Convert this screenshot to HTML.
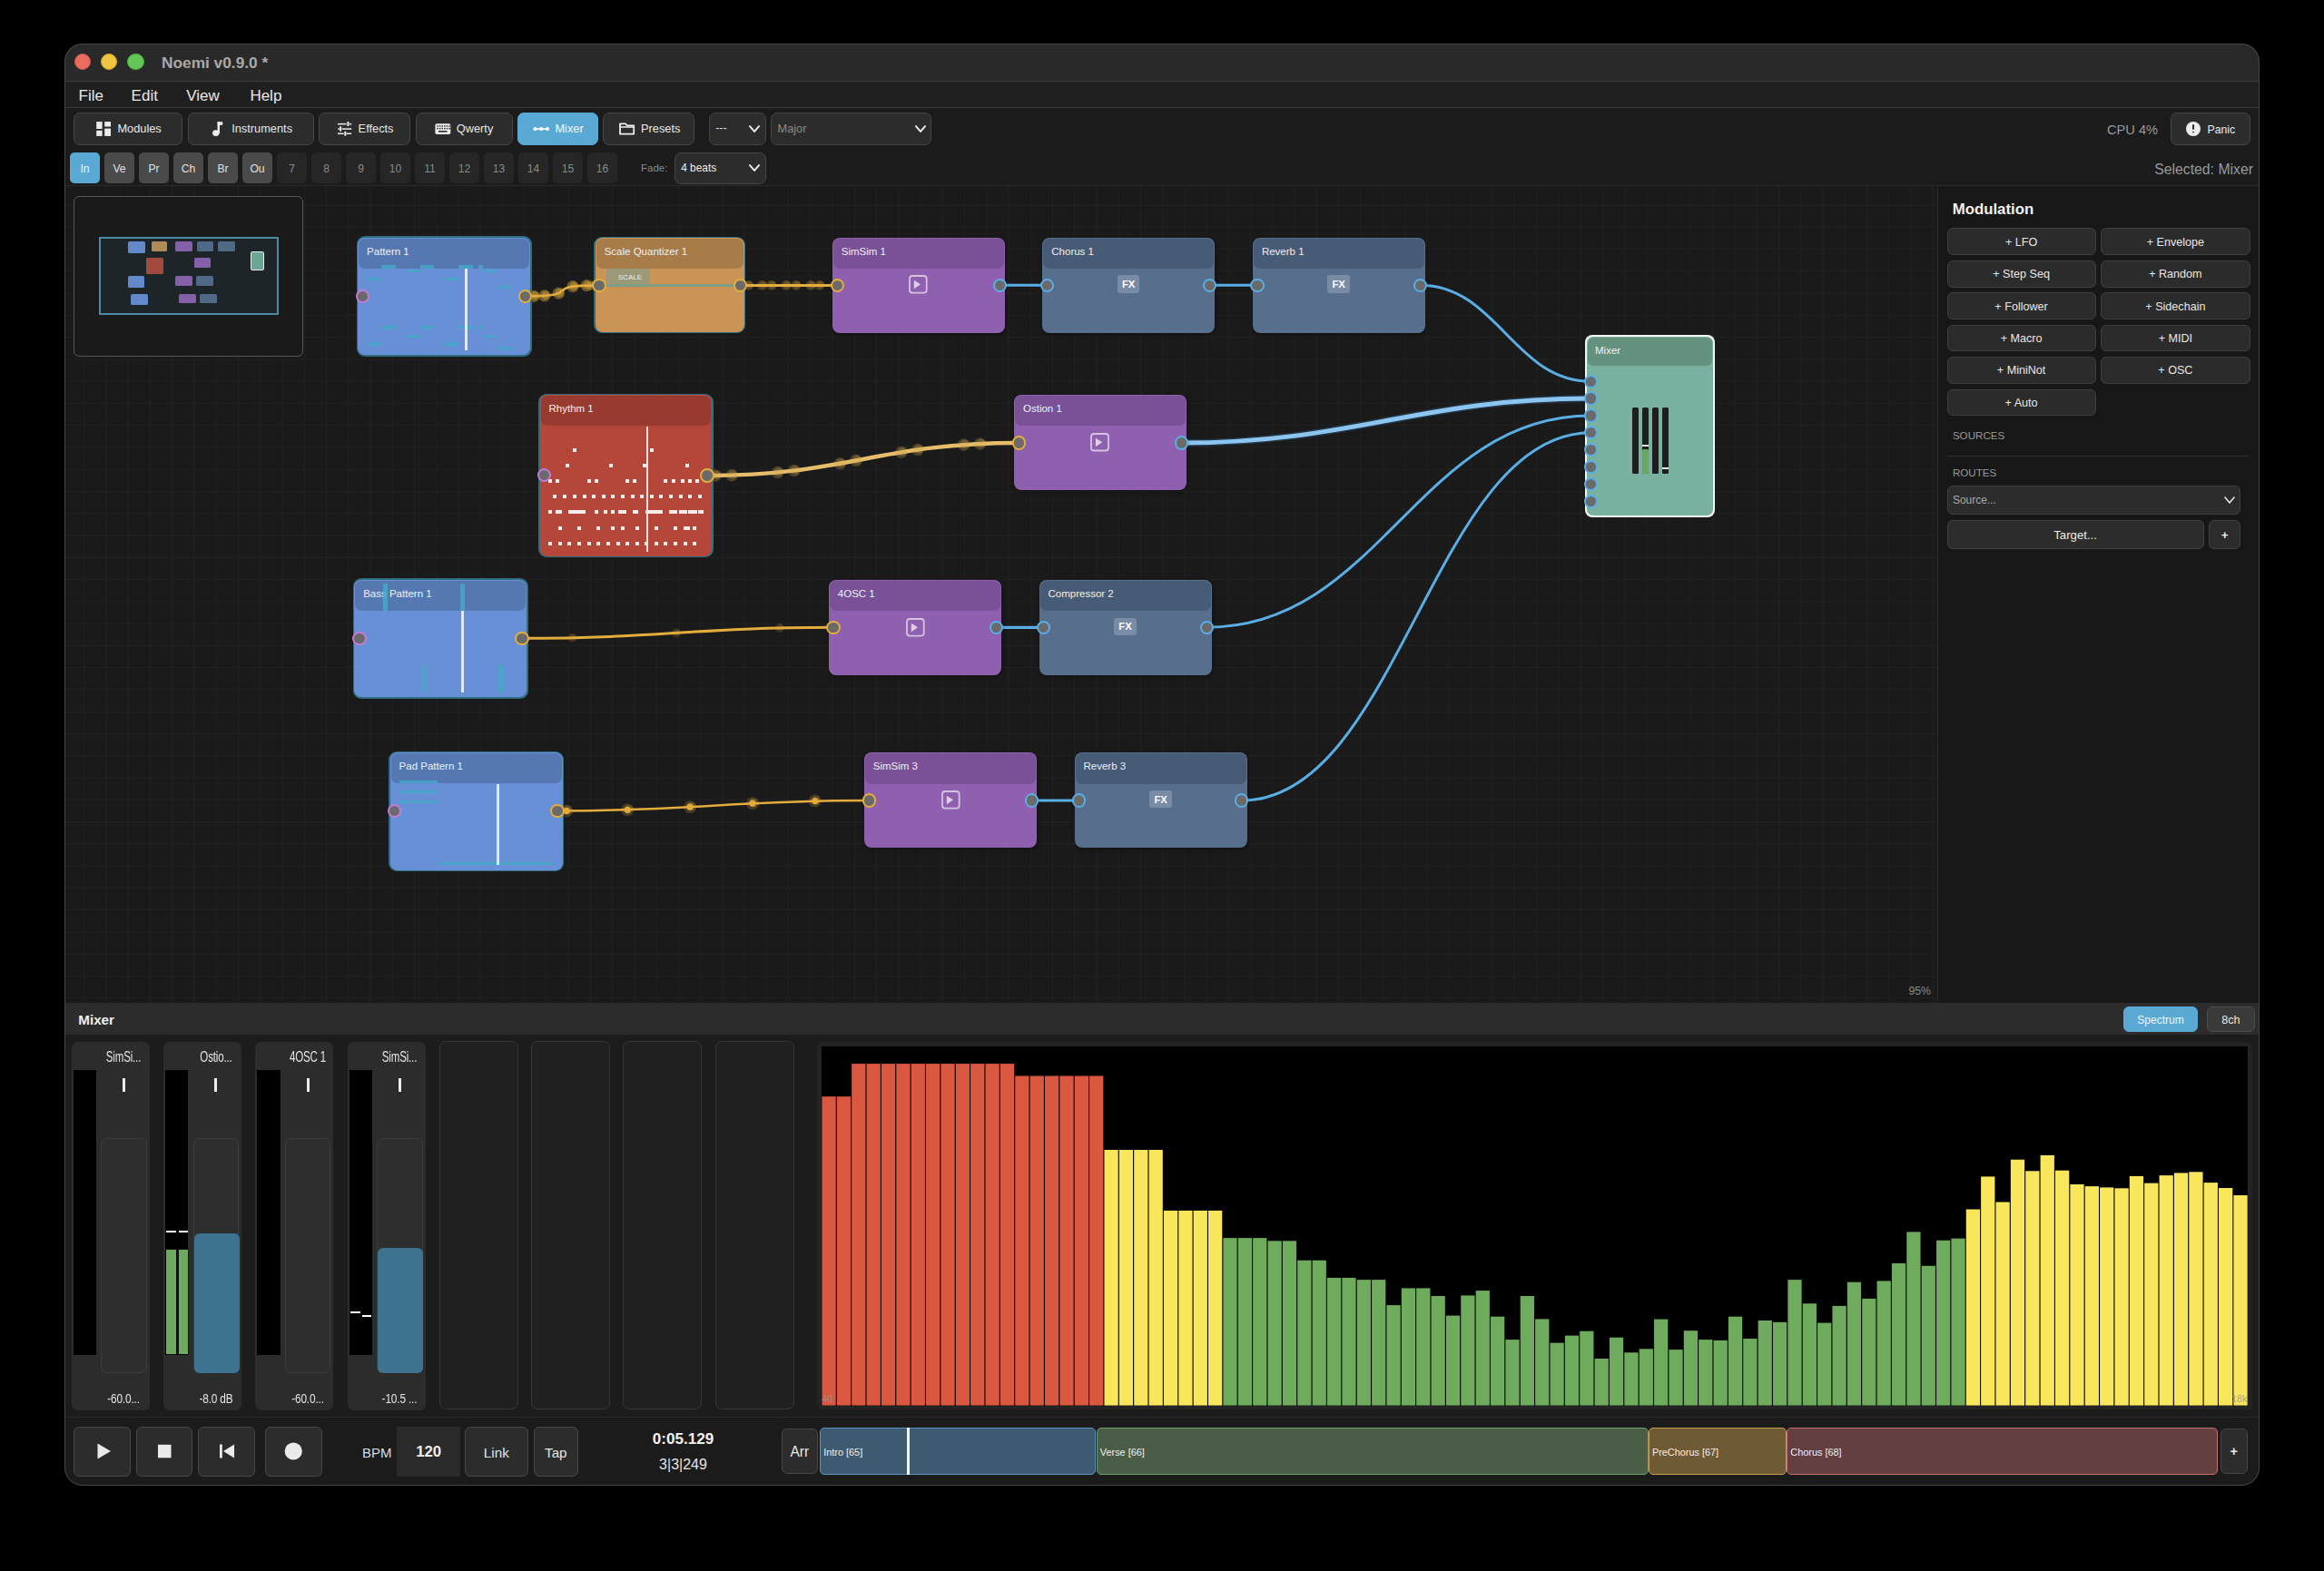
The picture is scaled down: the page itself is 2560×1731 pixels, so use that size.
<!DOCTYPE html><html><head><meta charset="utf-8"><title>Noemi</title><style>html,body{margin:0;padding:0;background:#000;}body{width:2560px;height:1731px;position:relative;overflow:hidden;font-family:"Liberation Sans", sans-serif;}</style></head><body>
<div style="position:absolute;left:71px;top:48px;width:2418px;height:1589px;border-radius:20px;overflow:hidden;background:#1b1b1b;">
<div style="position:absolute;left:-71px;top:-48px;width:2560px;height:1731px;">
<div style="position:absolute;left:71.0px;top:48.0px;width:2418.0px;height:41.0px;background:#2a292a;"></div>
<div style="position:absolute;left:71.0px;top:88.5px;width:2418.0px;height:1.5px;background:#3b3b3b;"></div>
<div style="position:absolute;left:82.0px;top:59.1px;width:18.2px;height:18.2px;box-sizing:border-box;border-radius:50%;background:#ec6b5f;border:0.8px solid #d0574c;"></div>
<div style="position:absolute;left:111.3px;top:59.1px;width:18.2px;height:18.2px;box-sizing:border-box;border-radius:50%;background:#f1c43f;border:0.8px solid #d6a42e;"></div>
<div style="position:absolute;left:140.4px;top:59.1px;width:18.2px;height:18.2px;box-sizing:border-box;border-radius:50%;background:#63c655;border:0.8px solid #4ea943;"></div>
<div style="position:absolute;left:178.0px;top:60.8px;font-size:17.3px;line-height:1;color:#a9a9a9;font-weight:bold;white-space:nowrap;">Noemi v0.9.0 *</div>
<div style="position:absolute;left:71.0px;top:90.0px;width:2418.0px;height:28.0px;background:#1f1f1f;"></div>
<div style="position:absolute;left:71.0px;top:117.7px;width:2418.0px;height:1.5px;background:#393939;"></div>
<div style="position:absolute;left:86.5px;top:96.5px;font-size:17px;line-height:1;color:#e8e8e8;font-weight:normal;white-space:nowrap;">File</div>
<div style="position:absolute;left:144.6px;top:96.5px;font-size:17px;line-height:1;color:#e8e8e8;font-weight:normal;white-space:nowrap;">Edit</div>
<div style="position:absolute;left:205.2px;top:96.5px;font-size:17px;line-height:1;color:#e8e8e8;font-weight:normal;white-space:nowrap;">View</div>
<div style="position:absolute;left:275.4px;top:96.5px;font-size:17px;line-height:1;color:#e8e8e8;font-weight:normal;white-space:nowrap;">Help</div>
<div style="position:absolute;left:71.0px;top:119.2px;width:2418.0px;height:84.8px;background:#1b1b1b;"></div>
<div style="position:absolute;left:81.2px;top:124.3px;width:120.1px;height:35.8px;box-sizing:border-box;background:#2c2c2c;border:1.8px solid #464646;border-radius:7px;"></div>
<div style="position:absolute;left:129.4px;top:136.1px;font-size:12.8px;line-height:1;color:#e8e8e8;font-weight:normal;white-space:nowrap;">Modules</div>
<div style="position:absolute;left:207.0px;top:124.3px;width:138.6px;height:35.8px;box-sizing:border-box;background:#2c2c2c;border:1.8px solid #464646;border-radius:7px;"></div>
<div style="position:absolute;left:255.2px;top:136.1px;font-size:12.8px;line-height:1;color:#e8e8e8;font-weight:normal;white-space:nowrap;">Instruments</div>
<div style="position:absolute;left:351.3px;top:124.3px;width:100.9px;height:35.8px;box-sizing:border-box;background:#2c2c2c;border:1.8px solid #464646;border-radius:7px;"></div>
<div style="position:absolute;left:394.6px;top:136.1px;font-size:12.8px;line-height:1;color:#e8e8e8;font-weight:normal;white-space:nowrap;">Effects</div>
<div style="position:absolute;left:457.8px;top:124.3px;width:107.1px;height:35.8px;box-sizing:border-box;background:#2c2c2c;border:1.8px solid #464646;border-radius:7px;"></div>
<div style="position:absolute;left:502.8px;top:136.1px;font-size:12.8px;line-height:1;color:#e8e8e8;font-weight:normal;white-space:nowrap;">Qwerty</div>
<div style="position:absolute;left:570.0px;top:124.3px;width:89.0px;height:35.8px;box-sizing:border-box;background:#5aa8d4;border:1.8px solid #5aa8d4;border-radius:7px;"></div>
<div style="position:absolute;left:611.4px;top:136.1px;font-size:12.8px;line-height:1;color:#f2f8fc;font-weight:normal;white-space:nowrap;">Mixer</div>
<div style="position:absolute;left:664.0px;top:124.3px;width:101.2px;height:35.8px;box-sizing:border-box;background:#2c2c2c;border:1.8px solid #464646;border-radius:7px;"></div>
<div style="position:absolute;left:706.0px;top:136.1px;font-size:12.8px;line-height:1;color:#e8e8e8;font-weight:normal;white-space:nowrap;">Presets</div>
<svg style="position:absolute;left:0;top:0" width="2560" height="300"><rect x="106.2" y="134.1" width="6.4" height="7.9" fill="#ececec"/><rect x="106.2" y="143.8" width="6.4" height="6.1" fill="#ececec"/><rect x="115.2" y="134.1" width="6.8" height="5.4" fill="#ececec"/><rect x="115.2" y="141.6" width="6.8" height="8.3" fill="#ececec"/><ellipse cx="237.8" cy="146.6" rx="3.7" ry="3.4" fill="#ececec"/><rect x="239.6" y="134.2" width="2.4" height="12.6" fill="#ececec"/><path d="M239.6 134.2 L245.3 134.2 L245.3 137.6 L239.6 138.6 Z" fill="#ececec"/><g fill="#ececec"><rect x="372" y="135.9" width="9.6" height="1.5"/><rect x="385" y="135.9" width="2.2" height="1.5"/><rect x="382.4" y="134" width="2" height="5"/><rect x="372" y="141.3" width="1.7" height="1.5"/><rect x="376.6" y="141.3" width="10.6" height="1.5"/><rect x="374.1" y="139.4" width="2" height="5.2"/><rect x="372" y="146.5" width="6.6" height="1.5"/><rect x="381.6" y="146.5" width="5.6" height="1.5"/><rect x="379.3" y="144.8" width="2" height="4.9"/></g><rect x="479.4" y="136.2" width="16.9" height="11.8" rx="1.8" fill="#ececec"/><rect x="481.3" y="138.2" width="1.5" height="1.5" fill="#2c2c2c"/><rect x="483.9" y="138.2" width="1.5" height="1.5" fill="#2c2c2c"/><rect x="486.5" y="138.2" width="1.5" height="1.5" fill="#2c2c2c"/><rect x="489.1" y="138.2" width="1.5" height="1.5" fill="#2c2c2c"/><rect x="491.7" y="138.2" width="1.5" height="1.5" fill="#2c2c2c"/><rect x="494.3" y="138.2" width="1.5" height="1.5" fill="#2c2c2c"/><rect x="481.3" y="140.9" width="1.5" height="1.5" fill="#2c2c2c"/><rect x="483.9" y="140.9" width="1.5" height="1.5" fill="#2c2c2c"/><rect x="486.5" y="140.9" width="1.5" height="1.5" fill="#2c2c2c"/><rect x="489.1" y="140.9" width="1.5" height="1.5" fill="#2c2c2c"/><rect x="491.7" y="140.9" width="1.5" height="1.5" fill="#2c2c2c"/><rect x="494.3" y="140.9" width="1.5" height="1.5" fill="#2c2c2c"/><rect x="483" y="144" width="9.5" height="1.6" fill="#2c2c2c"/><line x1="588.5" y1="142.1" x2="604" y2="142.1" stroke="#f2f8fc" stroke-width="1.6"/><circle cx="589.5" cy="142.1" r="2.2" fill="#f2f8fc"/><circle cx="596.2" cy="142.1" r="2.2" fill="#f2f8fc"/><circle cx="603" cy="142.1" r="2.2" fill="#f2f8fc"/><path d="M683 136.3 L689 136.3 L690.6 138.3 L698.2 138.3 L698.2 147.6 L683 147.6 Z" fill="none" stroke="#ececec" stroke-width="1.8" stroke-linejoin="round"/><line x1="683" y1="140" x2="698.2" y2="140" stroke="#ececec" stroke-width="1.4"/></svg>
<div style="position:absolute;left:781.0px;top:124.3px;width:62.9px;height:35.8px;box-sizing:border-box;background:#2c2c2c;border:1.8px solid #444;border-radius:7px;"></div>
<div style="position:absolute;left:788.2px;top:135.4px;font-size:12.5px;line-height:1;color:#dddddd;font-weight:normal;white-space:nowrap;">---</div>
<svg style="position:absolute;left:823.2px;top:134.2px" width="16" height="16"><path d="M3.0 5.1 L8 10.9 L13.0 5.1" fill="none" stroke="#e6e6e6" stroke-width="2.1" stroke-linecap="round" stroke-linejoin="round"/></svg>
<div style="position:absolute;left:849.3px;top:124.3px;width:177.1px;height:35.8px;box-sizing:border-box;background:#2c2c2c;border:1.8px solid #444;border-radius:7px;"></div>
<div style="position:absolute;left:856.5px;top:136.1px;font-size:12.8px;line-height:1;color:#8a8a8a;font-weight:normal;white-space:nowrap;">Major</div>
<svg style="position:absolute;left:1005.8px;top:134.2px" width="16" height="16"><path d="M3.0 5.1 L8 10.9 L13.0 5.1" fill="none" stroke="#e6e6e6" stroke-width="2.1" stroke-linecap="round" stroke-linejoin="round"/></svg>
<div style="position:absolute;left:1777.0px;width:600px;text-align:right;top:136.1px;font-size:14.6px;line-height:1;color:#9a9a9a;font-weight:normal;white-space:nowrap;">CPU 4%</div>
<div style="position:absolute;left:2390.5px;top:124.3px;width:88.2px;height:35.8px;box-sizing:border-box;background:#2c2c2c;border:1.8px solid #464646;border-radius:7px;"></div>
<div style="position:absolute;left:2407.6px;top:133.6px;width:16.6px;height:16.6px;border-radius:50%;background:#ececec;"></div>
<div style="position:absolute;left:2415.1px;top:137.0px;width:1.8px;height:6.2px;background:#2c2c2c;border-radius:1px;"></div>
<div style="position:absolute;left:2415.1px;top:144.6px;width:1.8px;height:1.9px;background:#2c2c2c;"></div>
<div style="position:absolute;left:2431.6px;top:136.6px;font-size:12.2px;line-height:1;color:#ececec;font-weight:normal;white-space:nowrap;">Panic</div>
<div style="position:absolute;left:77.0px;top:168.0px;width:33px;height:33.7px;border-radius:5px;background:#5aa8d4;"></div>
<div style="position:absolute;left:-206.5px;width:600px;text-align:center;top:180.4px;font-size:12.1px;line-height:1;color:#eef6fb;font-weight:normal;white-space:nowrap;">In</div>
<div style="position:absolute;left:115.0px;top:168.0px;width:33px;height:33.7px;border-radius:5px;background:#4a4a4a;"></div>
<div style="position:absolute;left:-168.5px;width:600px;text-align:center;top:180.4px;font-size:12.1px;line-height:1;color:#e0e0e0;font-weight:normal;white-space:nowrap;">Ve</div>
<div style="position:absolute;left:153.0px;top:168.0px;width:33px;height:33.7px;border-radius:5px;background:#4a4a4a;"></div>
<div style="position:absolute;left:-130.5px;width:600px;text-align:center;top:180.4px;font-size:12.1px;line-height:1;color:#e0e0e0;font-weight:normal;white-space:nowrap;">Pr</div>
<div style="position:absolute;left:191.0px;top:168.0px;width:33px;height:33.7px;border-radius:5px;background:#4a4a4a;"></div>
<div style="position:absolute;left:-92.5px;width:600px;text-align:center;top:180.4px;font-size:12.1px;line-height:1;color:#e0e0e0;font-weight:normal;white-space:nowrap;">Ch</div>
<div style="position:absolute;left:229.0px;top:168.0px;width:33px;height:33.7px;border-radius:5px;background:#4a4a4a;"></div>
<div style="position:absolute;left:-54.5px;width:600px;text-align:center;top:180.4px;font-size:12.1px;line-height:1;color:#e0e0e0;font-weight:normal;white-space:nowrap;">Br</div>
<div style="position:absolute;left:267.0px;top:168.0px;width:33px;height:33.7px;border-radius:5px;background:#4a4a4a;"></div>
<div style="position:absolute;left:-16.5px;width:600px;text-align:center;top:180.4px;font-size:12.1px;line-height:1;color:#e0e0e0;font-weight:normal;white-space:nowrap;">Ou</div>
<div style="position:absolute;left:305.0px;top:168.0px;width:33px;height:33.7px;border-radius:5px;background:#262626;"></div>
<div style="position:absolute;left:21.5px;width:600px;text-align:center;top:180.4px;font-size:12.1px;line-height:1;color:#8a8a8a;font-weight:normal;white-space:nowrap;">7</div>
<div style="position:absolute;left:343.0px;top:168.0px;width:33px;height:33.7px;border-radius:5px;background:#262626;"></div>
<div style="position:absolute;left:59.5px;width:600px;text-align:center;top:180.4px;font-size:12.1px;line-height:1;color:#8a8a8a;font-weight:normal;white-space:nowrap;">8</div>
<div style="position:absolute;left:381.0px;top:168.0px;width:33px;height:33.7px;border-radius:5px;background:#262626;"></div>
<div style="position:absolute;left:97.5px;width:600px;text-align:center;top:180.4px;font-size:12.1px;line-height:1;color:#8a8a8a;font-weight:normal;white-space:nowrap;">9</div>
<div style="position:absolute;left:419.0px;top:168.0px;width:33px;height:33.7px;border-radius:5px;background:#262626;"></div>
<div style="position:absolute;left:135.5px;width:600px;text-align:center;top:180.4px;font-size:12.1px;line-height:1;color:#8a8a8a;font-weight:normal;white-space:nowrap;">10</div>
<div style="position:absolute;left:457.0px;top:168.0px;width:33px;height:33.7px;border-radius:5px;background:#262626;"></div>
<div style="position:absolute;left:173.5px;width:600px;text-align:center;top:180.4px;font-size:12.1px;line-height:1;color:#8a8a8a;font-weight:normal;white-space:nowrap;">11</div>
<div style="position:absolute;left:495.0px;top:168.0px;width:33px;height:33.7px;border-radius:5px;background:#262626;"></div>
<div style="position:absolute;left:211.5px;width:600px;text-align:center;top:180.4px;font-size:12.1px;line-height:1;color:#8a8a8a;font-weight:normal;white-space:nowrap;">12</div>
<div style="position:absolute;left:533.0px;top:168.0px;width:33px;height:33.7px;border-radius:5px;background:#262626;"></div>
<div style="position:absolute;left:249.5px;width:600px;text-align:center;top:180.4px;font-size:12.1px;line-height:1;color:#8a8a8a;font-weight:normal;white-space:nowrap;">13</div>
<div style="position:absolute;left:571.0px;top:168.0px;width:33px;height:33.7px;border-radius:5px;background:#262626;"></div>
<div style="position:absolute;left:287.5px;width:600px;text-align:center;top:180.4px;font-size:12.1px;line-height:1;color:#8a8a8a;font-weight:normal;white-space:nowrap;">14</div>
<div style="position:absolute;left:609.0px;top:168.0px;width:33px;height:33.7px;border-radius:5px;background:#262626;"></div>
<div style="position:absolute;left:325.5px;width:600px;text-align:center;top:180.4px;font-size:12.1px;line-height:1;color:#8a8a8a;font-weight:normal;white-space:nowrap;">15</div>
<div style="position:absolute;left:647.0px;top:168.0px;width:33px;height:33.7px;border-radius:5px;background:#262626;"></div>
<div style="position:absolute;left:363.5px;width:600px;text-align:center;top:180.4px;font-size:12.1px;line-height:1;color:#8a8a8a;font-weight:normal;white-space:nowrap;">16</div>
<div style="position:absolute;left:706.0px;top:180.3px;font-size:11.5px;line-height:1;color:#8a8a8a;font-weight:normal;white-space:nowrap;">Fade:</div>
<div style="position:absolute;left:743.0px;top:167.5px;width:100.9px;height:35.0px;box-sizing:border-box;background:#2c2c2c;border:1.8px solid #464646;border-radius:7px;"></div>
<div style="position:absolute;left:750.2px;top:179.9px;font-size:11.9px;line-height:1;color:#eeeeee;font-weight:normal;white-space:nowrap;">4 beats</div>
<svg style="position:absolute;left:823.2px;top:177.2px" width="16" height="16"><path d="M3.0 5.1 L8 10.9 L13.0 5.1" fill="none" stroke="#e6e6e6" stroke-width="2.1" stroke-linecap="round" stroke-linejoin="round"/></svg>
<div style="position:absolute;left:1882.0px;width:600px;text-align:right;top:178.6px;font-size:15.8px;line-height:1;color:#9a9a9a;font-weight:normal;white-space:nowrap;">Selected: Mixer</div>
<div style="position:absolute;left:71.0px;top:203.6px;width:2418.0px;height:1.4px;background:#2a2a2a;"></div>
<div style="position:absolute;left:72.0px;top:205.0px;width:2063.0px;height:899.6px;background:#1a1a1a;"></div>
<svg style="position:absolute;left:0;top:0" width="2560" height="1120"><line x1="92.80" y1="205" x2="92.80" y2="1104.6" stroke="#222222" stroke-width="1"/><line x1="117.04" y1="205" x2="117.04" y2="1104.6" stroke="#222222" stroke-width="1"/><line x1="141.29" y1="205" x2="141.29" y2="1104.6" stroke="#222222" stroke-width="1"/><line x1="165.53" y1="205" x2="165.53" y2="1104.6" stroke="#222222" stroke-width="1"/><line x1="189.77" y1="205" x2="189.77" y2="1104.6" stroke="#222222" stroke-width="1"/><line x1="214.01" y1="205" x2="214.01" y2="1104.6" stroke="#222222" stroke-width="1"/><line x1="238.26" y1="205" x2="238.26" y2="1104.6" stroke="#222222" stroke-width="1"/><line x1="262.50" y1="205" x2="262.50" y2="1104.6" stroke="#222222" stroke-width="1"/><line x1="286.74" y1="205" x2="286.74" y2="1104.6" stroke="#222222" stroke-width="1"/><line x1="310.99" y1="205" x2="310.99" y2="1104.6" stroke="#222222" stroke-width="1"/><line x1="335.23" y1="205" x2="335.23" y2="1104.6" stroke="#222222" stroke-width="1"/><line x1="359.47" y1="205" x2="359.47" y2="1104.6" stroke="#222222" stroke-width="1"/><line x1="383.72" y1="205" x2="383.72" y2="1104.6" stroke="#222222" stroke-width="1"/><line x1="407.96" y1="205" x2="407.96" y2="1104.6" stroke="#222222" stroke-width="1"/><line x1="432.20" y1="205" x2="432.20" y2="1104.6" stroke="#222222" stroke-width="1"/><line x1="456.44" y1="205" x2="456.44" y2="1104.6" stroke="#222222" stroke-width="1"/><line x1="480.69" y1="205" x2="480.69" y2="1104.6" stroke="#222222" stroke-width="1"/><line x1="504.93" y1="205" x2="504.93" y2="1104.6" stroke="#222222" stroke-width="1"/><line x1="529.17" y1="205" x2="529.17" y2="1104.6" stroke="#222222" stroke-width="1"/><line x1="553.42" y1="205" x2="553.42" y2="1104.6" stroke="#222222" stroke-width="1"/><line x1="577.66" y1="205" x2="577.66" y2="1104.6" stroke="#222222" stroke-width="1"/><line x1="601.90" y1="205" x2="601.90" y2="1104.6" stroke="#222222" stroke-width="1"/><line x1="626.15" y1="205" x2="626.15" y2="1104.6" stroke="#222222" stroke-width="1"/><line x1="650.39" y1="205" x2="650.39" y2="1104.6" stroke="#222222" stroke-width="1"/><line x1="674.63" y1="205" x2="674.63" y2="1104.6" stroke="#222222" stroke-width="1"/><line x1="698.88" y1="205" x2="698.88" y2="1104.6" stroke="#222222" stroke-width="1"/><line x1="723.12" y1="205" x2="723.12" y2="1104.6" stroke="#222222" stroke-width="1"/><line x1="747.36" y1="205" x2="747.36" y2="1104.6" stroke="#222222" stroke-width="1"/><line x1="771.60" y1="205" x2="771.60" y2="1104.6" stroke="#222222" stroke-width="1"/><line x1="795.85" y1="205" x2="795.85" y2="1104.6" stroke="#222222" stroke-width="1"/><line x1="820.09" y1="205" x2="820.09" y2="1104.6" stroke="#222222" stroke-width="1"/><line x1="844.33" y1="205" x2="844.33" y2="1104.6" stroke="#222222" stroke-width="1"/><line x1="868.58" y1="205" x2="868.58" y2="1104.6" stroke="#222222" stroke-width="1"/><line x1="892.82" y1="205" x2="892.82" y2="1104.6" stroke="#222222" stroke-width="1"/><line x1="917.06" y1="205" x2="917.06" y2="1104.6" stroke="#222222" stroke-width="1"/><line x1="941.31" y1="205" x2="941.31" y2="1104.6" stroke="#222222" stroke-width="1"/><line x1="965.55" y1="205" x2="965.55" y2="1104.6" stroke="#222222" stroke-width="1"/><line x1="989.79" y1="205" x2="989.79" y2="1104.6" stroke="#222222" stroke-width="1"/><line x1="1014.03" y1="205" x2="1014.03" y2="1104.6" stroke="#222222" stroke-width="1"/><line x1="1038.28" y1="205" x2="1038.28" y2="1104.6" stroke="#222222" stroke-width="1"/><line x1="1062.52" y1="205" x2="1062.52" y2="1104.6" stroke="#222222" stroke-width="1"/><line x1="1086.76" y1="205" x2="1086.76" y2="1104.6" stroke="#222222" stroke-width="1"/><line x1="1111.01" y1="205" x2="1111.01" y2="1104.6" stroke="#222222" stroke-width="1"/><line x1="1135.25" y1="205" x2="1135.25" y2="1104.6" stroke="#222222" stroke-width="1"/><line x1="1159.49" y1="205" x2="1159.49" y2="1104.6" stroke="#222222" stroke-width="1"/><line x1="1183.74" y1="205" x2="1183.74" y2="1104.6" stroke="#222222" stroke-width="1"/><line x1="1207.98" y1="205" x2="1207.98" y2="1104.6" stroke="#222222" stroke-width="1"/><line x1="1232.22" y1="205" x2="1232.22" y2="1104.6" stroke="#222222" stroke-width="1"/><line x1="1256.46" y1="205" x2="1256.46" y2="1104.6" stroke="#222222" stroke-width="1"/><line x1="1280.71" y1="205" x2="1280.71" y2="1104.6" stroke="#222222" stroke-width="1"/><line x1="1304.95" y1="205" x2="1304.95" y2="1104.6" stroke="#222222" stroke-width="1"/><line x1="1329.19" y1="205" x2="1329.19" y2="1104.6" stroke="#222222" stroke-width="1"/><line x1="1353.44" y1="205" x2="1353.44" y2="1104.6" stroke="#222222" stroke-width="1"/><line x1="1377.68" y1="205" x2="1377.68" y2="1104.6" stroke="#222222" stroke-width="1"/><line x1="1401.92" y1="205" x2="1401.92" y2="1104.6" stroke="#222222" stroke-width="1"/><line x1="1426.16" y1="205" x2="1426.16" y2="1104.6" stroke="#222222" stroke-width="1"/><line x1="1450.41" y1="205" x2="1450.41" y2="1104.6" stroke="#222222" stroke-width="1"/><line x1="1474.65" y1="205" x2="1474.65" y2="1104.6" stroke="#222222" stroke-width="1"/><line x1="1498.89" y1="205" x2="1498.89" y2="1104.6" stroke="#222222" stroke-width="1"/><line x1="1523.14" y1="205" x2="1523.14" y2="1104.6" stroke="#222222" stroke-width="1"/><line x1="1547.38" y1="205" x2="1547.38" y2="1104.6" stroke="#222222" stroke-width="1"/><line x1="1571.62" y1="205" x2="1571.62" y2="1104.6" stroke="#222222" stroke-width="1"/><line x1="1595.87" y1="205" x2="1595.87" y2="1104.6" stroke="#222222" stroke-width="1"/><line x1="1620.11" y1="205" x2="1620.11" y2="1104.6" stroke="#222222" stroke-width="1"/><line x1="1644.35" y1="205" x2="1644.35" y2="1104.6" stroke="#222222" stroke-width="1"/><line x1="1668.59" y1="205" x2="1668.59" y2="1104.6" stroke="#222222" stroke-width="1"/><line x1="1692.84" y1="205" x2="1692.84" y2="1104.6" stroke="#222222" stroke-width="1"/><line x1="1717.08" y1="205" x2="1717.08" y2="1104.6" stroke="#222222" stroke-width="1"/><line x1="1741.32" y1="205" x2="1741.32" y2="1104.6" stroke="#222222" stroke-width="1"/><line x1="1765.57" y1="205" x2="1765.57" y2="1104.6" stroke="#222222" stroke-width="1"/><line x1="1789.81" y1="205" x2="1789.81" y2="1104.6" stroke="#222222" stroke-width="1"/><line x1="1814.05" y1="205" x2="1814.05" y2="1104.6" stroke="#222222" stroke-width="1"/><line x1="1838.30" y1="205" x2="1838.30" y2="1104.6" stroke="#222222" stroke-width="1"/><line x1="1862.54" y1="205" x2="1862.54" y2="1104.6" stroke="#222222" stroke-width="1"/><line x1="1886.78" y1="205" x2="1886.78" y2="1104.6" stroke="#222222" stroke-width="1"/><line x1="1911.02" y1="205" x2="1911.02" y2="1104.6" stroke="#222222" stroke-width="1"/><line x1="1935.27" y1="205" x2="1935.27" y2="1104.6" stroke="#222222" stroke-width="1"/><line x1="1959.51" y1="205" x2="1959.51" y2="1104.6" stroke="#222222" stroke-width="1"/><line x1="1983.75" y1="205" x2="1983.75" y2="1104.6" stroke="#222222" stroke-width="1"/><line x1="2008.00" y1="205" x2="2008.00" y2="1104.6" stroke="#222222" stroke-width="1"/><line x1="2032.24" y1="205" x2="2032.24" y2="1104.6" stroke="#222222" stroke-width="1"/><line x1="2056.48" y1="205" x2="2056.48" y2="1104.6" stroke="#222222" stroke-width="1"/><line x1="2080.73" y1="205" x2="2080.73" y2="1104.6" stroke="#222222" stroke-width="1"/><line x1="2104.97" y1="205" x2="2104.97" y2="1104.6" stroke="#222222" stroke-width="1"/><line x1="2129.21" y1="205" x2="2129.21" y2="1104.6" stroke="#222222" stroke-width="1"/><line x1="72" y1="225.95" x2="2135" y2="225.95" stroke="#222222" stroke-width="1"/><line x1="72" y1="250.22" x2="2135" y2="250.22" stroke="#222222" stroke-width="1"/><line x1="72" y1="274.49" x2="2135" y2="274.49" stroke="#222222" stroke-width="1"/><line x1="72" y1="298.76" x2="2135" y2="298.76" stroke="#222222" stroke-width="1"/><line x1="72" y1="323.03" x2="2135" y2="323.03" stroke="#222222" stroke-width="1"/><line x1="72" y1="347.30" x2="2135" y2="347.30" stroke="#222222" stroke-width="1"/><line x1="72" y1="371.57" x2="2135" y2="371.57" stroke="#222222" stroke-width="1"/><line x1="72" y1="395.84" x2="2135" y2="395.84" stroke="#222222" stroke-width="1"/><line x1="72" y1="420.11" x2="2135" y2="420.11" stroke="#222222" stroke-width="1"/><line x1="72" y1="444.38" x2="2135" y2="444.38" stroke="#222222" stroke-width="1"/><line x1="72" y1="468.65" x2="2135" y2="468.65" stroke="#222222" stroke-width="1"/><line x1="72" y1="492.92" x2="2135" y2="492.92" stroke="#222222" stroke-width="1"/><line x1="72" y1="517.19" x2="2135" y2="517.19" stroke="#222222" stroke-width="1"/><line x1="72" y1="541.46" x2="2135" y2="541.46" stroke="#222222" stroke-width="1"/><line x1="72" y1="565.73" x2="2135" y2="565.73" stroke="#222222" stroke-width="1"/><line x1="72" y1="590.00" x2="2135" y2="590.00" stroke="#222222" stroke-width="1"/><line x1="72" y1="614.27" x2="2135" y2="614.27" stroke="#222222" stroke-width="1"/><line x1="72" y1="638.54" x2="2135" y2="638.54" stroke="#222222" stroke-width="1"/><line x1="72" y1="662.81" x2="2135" y2="662.81" stroke="#222222" stroke-width="1"/><line x1="72" y1="687.08" x2="2135" y2="687.08" stroke="#222222" stroke-width="1"/><line x1="72" y1="711.35" x2="2135" y2="711.35" stroke="#222222" stroke-width="1"/><line x1="72" y1="735.62" x2="2135" y2="735.62" stroke="#222222" stroke-width="1"/><line x1="72" y1="759.89" x2="2135" y2="759.89" stroke="#222222" stroke-width="1"/><line x1="72" y1="784.16" x2="2135" y2="784.16" stroke="#222222" stroke-width="1"/><line x1="72" y1="808.43" x2="2135" y2="808.43" stroke="#222222" stroke-width="1"/><line x1="72" y1="832.70" x2="2135" y2="832.70" stroke="#222222" stroke-width="1"/><line x1="72" y1="856.97" x2="2135" y2="856.97" stroke="#222222" stroke-width="1"/><line x1="72" y1="881.24" x2="2135" y2="881.24" stroke="#222222" stroke-width="1"/><line x1="72" y1="905.51" x2="2135" y2="905.51" stroke="#222222" stroke-width="1"/><line x1="72" y1="929.78" x2="2135" y2="929.78" stroke="#222222" stroke-width="1"/><line x1="72" y1="954.05" x2="2135" y2="954.05" stroke="#222222" stroke-width="1"/><line x1="72" y1="978.32" x2="2135" y2="978.32" stroke="#222222" stroke-width="1"/><line x1="72" y1="1002.59" x2="2135" y2="1002.59" stroke="#222222" stroke-width="1"/><line x1="72" y1="1026.86" x2="2135" y2="1026.86" stroke="#222222" stroke-width="1"/><line x1="72" y1="1051.13" x2="2135" y2="1051.13" stroke="#222222" stroke-width="1"/><line x1="72" y1="1075.40" x2="2135" y2="1075.40" stroke="#222222" stroke-width="1"/><line x1="72" y1="1099.67" x2="2135" y2="1099.67" stroke="#222222" stroke-width="1"/></svg>
<div style="position:absolute;left:81.2px;top:215.5px;width:253px;height:177px;box-sizing:border-box;border:1.8px solid #565656;border-radius:6px;background:#1a1a1a;"></div>
<div style="position:absolute;left:108.6px;top:260.9px;width:198.2px;height:86.5px;box-sizing:border-box;border:2.6px solid #4a8ba2;background:#1d2528;"></div>
<div style="position:absolute;left:140.9px;top:266.2px;width:18.9px;height:12.7px;background:#6289c9;border-radius:1.5px;"></div>
<div style="position:absolute;left:167.0px;top:266.2px;width:16.7px;height:10.6px;background:#b08b58;border-radius:1.5px;"></div>
<div style="position:absolute;left:193.2px;top:266.2px;width:19.0px;height:10.6px;background:#8360a8;border-radius:1.5px;"></div>
<div style="position:absolute;left:216.8px;top:266.2px;width:18.7px;height:10.6px;background:#506987;border-radius:1.5px;"></div>
<div style="position:absolute;left:240.0px;top:266.2px;width:19.0px;height:10.6px;background:#506987;border-radius:1.5px;"></div>
<div style="position:absolute;left:161.0px;top:284.0px;width:18.9px;height:17.5px;background:#a34a3f;border-radius:1.5px;"></div>
<div style="position:absolute;left:213.6px;top:284.0px;width:18.7px;height:10.5px;background:#8360a8;border-radius:1.5px;"></div>
<div style="position:absolute;left:140.7px;top:304.4px;width:18.7px;height:12.5px;background:#6289c9;border-radius:1.5px;"></div>
<div style="position:absolute;left:193.0px;top:304.4px;width:18.8px;height:10.6px;background:#8360a8;border-radius:1.5px;"></div>
<div style="position:absolute;left:216.4px;top:304.4px;width:18.7px;height:10.6px;background:#506987;border-radius:1.5px;"></div>
<div style="position:absolute;left:144.4px;top:323.5px;width:18.6px;height:12.7px;background:#6289c9;border-radius:1.5px;"></div>
<div style="position:absolute;left:197.0px;top:323.5px;width:18.8px;height:10.5px;background:#8360a8;border-radius:1.5px;"></div>
<div style="position:absolute;left:220.2px;top:323.5px;width:18.8px;height:10.5px;background:#506987;border-radius:1.5px;"></div>
<div style="position:absolute;left:276.3px;top:276.8px;width:15.2px;height:20.9px;box-sizing:border-box;background:#6aa693;border:1.5px solid #e8f0ec;border-radius:2px;"></div>
<div style="position:absolute;left:1527.0px;width:600px;text-align:right;top:1085.5px;font-size:12.3px;line-height:1;color:#8a8a8a;font-weight:normal;white-space:nowrap;">95%</div>
<div style="position:absolute;left:2135.0px;top:205.0px;width:354.0px;height:899.6px;background:#171717;"></div>
<div style="position:absolute;left:2133.8px;top:205.0px;width:1.5px;height:899.6px;background:#2c2c2c;"></div>
<div style="position:absolute;left:2150.7px;top:223.0px;font-size:16.8px;line-height:1;color:#f0f0f0;font-weight:bold;white-space:nowrap;">Modulation</div>
<div style="position:absolute;left:2144.6px;top:251.3px;width:164.1px;height:29.8px;box-sizing:border-box;background:#2b2b2b;border:1.8px solid #3f3f3f;border-radius:6px;"></div>
<div style="position:absolute;left:1926.6px;width:600px;text-align:center;top:260.6px;font-size:12.6px;line-height:1;color:#e8e8e8;font-weight:normal;white-space:nowrap;">+ LFO</div>
<div style="position:absolute;left:2314.2px;top:251.3px;width:164.5px;height:29.8px;box-sizing:border-box;background:#2b2b2b;border:1.8px solid #3f3f3f;border-radius:6px;"></div>
<div style="position:absolute;left:2096.4px;width:600px;text-align:center;top:260.6px;font-size:12.6px;line-height:1;color:#e8e8e8;font-weight:normal;white-space:nowrap;">+ Envelope</div>
<div style="position:absolute;left:2144.6px;top:286.8px;width:164.1px;height:29.8px;box-sizing:border-box;background:#2b2b2b;border:1.8px solid #3f3f3f;border-radius:6px;"></div>
<div style="position:absolute;left:1926.6px;width:600px;text-align:center;top:296.1px;font-size:12.6px;line-height:1;color:#e8e8e8;font-weight:normal;white-space:nowrap;">+ Step Seq</div>
<div style="position:absolute;left:2314.2px;top:286.8px;width:164.5px;height:29.8px;box-sizing:border-box;background:#2b2b2b;border:1.8px solid #3f3f3f;border-radius:6px;"></div>
<div style="position:absolute;left:2096.4px;width:600px;text-align:center;top:296.1px;font-size:12.6px;line-height:1;color:#e8e8e8;font-weight:normal;white-space:nowrap;">+ Random</div>
<div style="position:absolute;left:2144.6px;top:322.2px;width:164.1px;height:29.8px;box-sizing:border-box;background:#2b2b2b;border:1.8px solid #3f3f3f;border-radius:6px;"></div>
<div style="position:absolute;left:1926.6px;width:600px;text-align:center;top:331.5px;font-size:12.6px;line-height:1;color:#e8e8e8;font-weight:normal;white-space:nowrap;">+ Follower</div>
<div style="position:absolute;left:2314.2px;top:322.2px;width:164.5px;height:29.8px;box-sizing:border-box;background:#2b2b2b;border:1.8px solid #3f3f3f;border-radius:6px;"></div>
<div style="position:absolute;left:2096.4px;width:600px;text-align:center;top:331.5px;font-size:12.6px;line-height:1;color:#e8e8e8;font-weight:normal;white-space:nowrap;">+ Sidechain</div>
<div style="position:absolute;left:2144.6px;top:357.7px;width:164.1px;height:29.8px;box-sizing:border-box;background:#2b2b2b;border:1.8px solid #3f3f3f;border-radius:6px;"></div>
<div style="position:absolute;left:1926.6px;width:600px;text-align:center;top:367.0px;font-size:12.6px;line-height:1;color:#e8e8e8;font-weight:normal;white-space:nowrap;">+ Macro</div>
<div style="position:absolute;left:2314.2px;top:357.7px;width:164.5px;height:29.8px;box-sizing:border-box;background:#2b2b2b;border:1.8px solid #3f3f3f;border-radius:6px;"></div>
<div style="position:absolute;left:2096.4px;width:600px;text-align:center;top:367.0px;font-size:12.6px;line-height:1;color:#e8e8e8;font-weight:normal;white-space:nowrap;">+ MIDI</div>
<div style="position:absolute;left:2144.6px;top:393.1px;width:164.1px;height:29.8px;box-sizing:border-box;background:#2b2b2b;border:1.8px solid #3f3f3f;border-radius:6px;"></div>
<div style="position:absolute;left:1926.6px;width:600px;text-align:center;top:402.4px;font-size:12.6px;line-height:1;color:#e8e8e8;font-weight:normal;white-space:nowrap;">+ MiniNot</div>
<div style="position:absolute;left:2314.2px;top:393.1px;width:164.5px;height:29.8px;box-sizing:border-box;background:#2b2b2b;border:1.8px solid #3f3f3f;border-radius:6px;"></div>
<div style="position:absolute;left:2096.4px;width:600px;text-align:center;top:402.4px;font-size:12.6px;line-height:1;color:#e8e8e8;font-weight:normal;white-space:nowrap;">+ OSC</div>
<div style="position:absolute;left:2144.6px;top:428.6px;width:164.1px;height:29.8px;box-sizing:border-box;background:#2b2b2b;border:1.8px solid #3f3f3f;border-radius:6px;"></div>
<div style="position:absolute;left:1926.6px;width:600px;text-align:center;top:437.9px;font-size:12.6px;line-height:1;color:#e8e8e8;font-weight:normal;white-space:nowrap;">+ Auto</div>
<div style="position:absolute;left:2150.9px;top:473.8px;font-size:11.6px;line-height:1;color:#9a9a9a;font-weight:normal;white-space:nowrap;">SOURCES</div>
<div style="position:absolute;left:2144.3px;top:502.2px;width:334.2px;height:1.2px;background:#303030;"></div>
<div style="position:absolute;left:2150.9px;top:514.5px;font-size:11.6px;line-height:1;color:#9a9a9a;font-weight:normal;white-space:nowrap;">ROUTES</div>
<div style="position:absolute;left:2144.6px;top:534.9px;width:323.8px;height:32.4px;box-sizing:border-box;background:#2c2c2c;border:1.8px solid #404040;border-radius:6px;"></div>
<div style="position:absolute;left:2150.9px;top:544.8px;font-size:12.0px;line-height:1;color:#a8a8a8;font-weight:normal;white-space:nowrap;">Source...</div>
<svg style="position:absolute;left:2447.8px;top:543.2px" width="16" height="16"><path d="M3.0 5.1 L8 10.9 L13.0 5.1" fill="none" stroke="#e6e6e6" stroke-width="1.6" stroke-linecap="round" stroke-linejoin="round"/></svg>
<div style="position:absolute;left:2144.6px;top:573.1px;width:283.1px;height:32.3px;box-sizing:border-box;background:#2c2c2c;border:1.8px solid #404040;border-radius:6px;"></div>
<div style="position:absolute;left:1986.1px;width:600px;text-align:center;top:582.8px;font-size:13.2px;line-height:1;color:#ececec;font-weight:normal;white-space:nowrap;">Target...</div>
<div style="position:absolute;left:2433.3px;top:573.1px;width:35.1px;height:32.3px;box-sizing:border-box;background:#2c2c2c;border:1.8px solid #404040;border-radius:6px;"></div>
<div style="position:absolute;left:2150.8px;width:600px;text-align:center;top:583.1px;font-size:13.5px;line-height:1;color:#ececec;font-weight:bold;white-space:nowrap;">+</div>
<svg style="position:absolute;left:0;top:0" width="2560" height="1120"><defs><filter id="blur1" x="-50%" y="-50%" width="200%" height="200%"><feGaussianBlur stdDeviation="0.7"/></filter></defs><path d="M1101.4 314.3 C1124.8 314.3 1130.1 314.3 1153.5 314.3" fill="none" stroke="#5aaee6" stroke-width="3" stroke-linecap="round"/><path d="M1332.4 314.3 C1356.1 314.3 1361.3 314.3 1385.0 314.3" fill="none" stroke="#5aaee6" stroke-width="3" stroke-linecap="round"/><path d="M1564.2 314.3 C1648.9 314.3 1667.8 420.3 1752.5 420.3" fill="none" stroke="#5aaee6" stroke-width="3" stroke-linecap="round"/><path d="M1097.7 691.3 C1121.1 691.3 1126.3 691.3 1149.7 691.3" fill="none" stroke="#5aaee6" stroke-width="3.2" stroke-linecap="round"/><path d="M1329.4 691.3 C1519.4 691.3 1562.5 458.0 1752.5 458.0" fill="none" stroke="#5aaee6" stroke-width="3" stroke-linecap="round"/><path d="M1136.3 882.0 C1159.8 882.0 1165.1 882.0 1188.6 882.0" fill="none" stroke="#5aaee6" stroke-width="3" stroke-linecap="round"/><path d="M1367.6 882.0 C1540.8 882.0 1579.3 476.8 1752.5 476.8" fill="none" stroke="#5aaee6" stroke-width="3" stroke-linecap="round"/><path d="M1301.3 488.0 C1491.3 488.0 1562.5 439.1 1752.5 439.1" fill="none" stroke="#2a4a66" stroke-width="8" opacity="0.6"/><path d="M1301.3 488.0 C1491.3 488.0 1562.5 439.1 1752.5 439.1" fill="none" stroke="#8cc6f0" stroke-width="5" stroke-linecap="round"/><path d="M578.5 326.4 C648.5 326.4 590.0 314.4 660.0 314.4" fill="none" stroke="#e3ad3e" stroke-width="2.6" stroke-linecap="round"/><circle cx="588.0" cy="326.3" r="6.6" fill="#e3ad3e" opacity="0.42" filter="url(#blur1)"/><circle cx="589.0" cy="325.8" r="4.6" fill="#e3ad3e" opacity="0.42" filter="url(#blur1)"/><circle cx="599.8" cy="325.8" r="6.6" fill="#e3ad3e" opacity="0.42" filter="url(#blur1)"/><circle cx="600.8" cy="325.3" r="4.6" fill="#e3ad3e" opacity="0.42" filter="url(#blur1)"/><circle cx="615.4" cy="323.2" r="6.6" fill="#e3ad3e" opacity="0.42" filter="url(#blur1)"/><circle cx="616.4" cy="322.7" r="4.6" fill="#e3ad3e" opacity="0.42" filter="url(#blur1)"/><circle cx="631.0" cy="315.7" r="6.6" fill="#e3ad3e" opacity="0.42" filter="url(#blur1)"/><circle cx="632.0" cy="315.2" r="4.6" fill="#e3ad3e" opacity="0.42" filter="url(#blur1)"/><circle cx="646.2" cy="314.6" r="6.6" fill="#e3ad3e" opacity="0.42" filter="url(#blur1)"/><circle cx="647.2" cy="314.1" r="4.6" fill="#e3ad3e" opacity="0.42" filter="url(#blur1)"/><path d="M815.2 314.4 C863.4 314.4 874.1 314.4 922.2 314.4" fill="none" stroke="#e3ad3e" stroke-width="3" stroke-linecap="round"/><circle cx="824.6" cy="314.4" r="5.6" fill="#e3ad3e" opacity="0.22" filter="url(#blur1)"/><circle cx="825.6" cy="313.9" r="3.9" fill="#e3ad3e" opacity="0.22" filter="url(#blur1)"/><circle cx="839.4" cy="314.4" r="5.6" fill="#e3ad3e" opacity="0.22" filter="url(#blur1)"/><circle cx="840.4" cy="313.9" r="3.9" fill="#e3ad3e" opacity="0.22" filter="url(#blur1)"/><circle cx="849.8" cy="314.4" r="5.6" fill="#e3ad3e" opacity="0.22" filter="url(#blur1)"/><circle cx="850.8" cy="313.9" r="3.9" fill="#e3ad3e" opacity="0.22" filter="url(#blur1)"/><circle cx="865.9" cy="314.4" r="5.6" fill="#e3ad3e" opacity="0.22" filter="url(#blur1)"/><circle cx="866.9" cy="313.9" r="3.9" fill="#e3ad3e" opacity="0.22" filter="url(#blur1)"/><circle cx="876.9" cy="314.4" r="5.6" fill="#e3ad3e" opacity="0.22" filter="url(#blur1)"/><circle cx="877.9" cy="313.9" r="3.9" fill="#e3ad3e" opacity="0.22" filter="url(#blur1)"/><circle cx="893.0" cy="314.4" r="5.6" fill="#e3ad3e" opacity="0.22" filter="url(#blur1)"/><circle cx="894.0" cy="313.9" r="3.9" fill="#e3ad3e" opacity="0.22" filter="url(#blur1)"/><circle cx="902.7" cy="314.4" r="5.6" fill="#e3ad3e" opacity="0.22" filter="url(#blur1)"/><circle cx="903.7" cy="313.9" r="3.9" fill="#e3ad3e" opacity="0.22" filter="url(#blur1)"/><circle cx="652.0" cy="314.5" r="5.6" fill="#e3ad3e" opacity="0.22" filter="url(#blur1)"/><circle cx="653.0" cy="314.0" r="3.9" fill="#e3ad3e" opacity="0.22" filter="url(#blur1)"/><path d="M778.9 524.0 C933.4 524.0 967.8 488.0 1122.3 488.0" fill="none" stroke="#e6bd6a" stroke-width="4.5" stroke-linecap="round"/><circle cx="788.1" cy="524.0" r="6.8" fill="#d9ad55" opacity="0.25" filter="url(#blur1)"/><circle cx="789.1" cy="523.5" r="4.8" fill="#d9ad55" opacity="0.25" filter="url(#blur1)"/><circle cx="806.1" cy="523.6" r="6.8" fill="#d9ad55" opacity="0.25" filter="url(#blur1)"/><circle cx="807.1" cy="523.1" r="4.8" fill="#d9ad55" opacity="0.25" filter="url(#blur1)"/><circle cx="856.7" cy="520.5" r="6.8" fill="#d9ad55" opacity="0.25" filter="url(#blur1)"/><circle cx="857.7" cy="520.0" r="4.8" fill="#d9ad55" opacity="0.25" filter="url(#blur1)"/><circle cx="874.8" cy="518.5" r="6.8" fill="#d9ad55" opacity="0.25" filter="url(#blur1)"/><circle cx="875.8" cy="518.0" r="4.8" fill="#d9ad55" opacity="0.25" filter="url(#blur1)"/><circle cx="925.4" cy="510.7" r="6.8" fill="#d9ad55" opacity="0.25" filter="url(#blur1)"/><circle cx="926.4" cy="510.2" r="4.8" fill="#d9ad55" opacity="0.25" filter="url(#blur1)"/><circle cx="943.0" cy="507.4" r="6.8" fill="#d9ad55" opacity="0.25" filter="url(#blur1)"/><circle cx="944.0" cy="506.9" r="4.8" fill="#d9ad55" opacity="0.25" filter="url(#blur1)"/><circle cx="992.9" cy="498.3" r="6.8" fill="#d9ad55" opacity="0.25" filter="url(#blur1)"/><circle cx="993.9" cy="497.8" r="4.8" fill="#d9ad55" opacity="0.25" filter="url(#blur1)"/><circle cx="1011.0" cy="495.5" r="6.8" fill="#d9ad55" opacity="0.25" filter="url(#blur1)"/><circle cx="1012.0" cy="495.0" r="4.8" fill="#d9ad55" opacity="0.25" filter="url(#blur1)"/><circle cx="1061.6" cy="490.1" r="6.8" fill="#d9ad55" opacity="0.25" filter="url(#blur1)"/><circle cx="1062.6" cy="489.6" r="4.8" fill="#d9ad55" opacity="0.25" filter="url(#blur1)"/><circle cx="1079.6" cy="489.0" r="6.8" fill="#d9ad55" opacity="0.25" filter="url(#blur1)"/><circle cx="1080.6" cy="488.5" r="4.8" fill="#d9ad55" opacity="0.25" filter="url(#blur1)"/><path d="M575.0 703.3 C729.4 703.3 763.6 691.3 918.0 691.3" fill="none" stroke="#e3ad3e" stroke-width="3" stroke-linecap="round"/><circle cx="630.2" cy="702.7" r="5" fill="#e3ad3e" opacity="0.14" filter="url(#blur1)"/><circle cx="631.2" cy="702.2" r="3.5" fill="#e3ad3e" opacity="0.14" filter="url(#blur1)"/><circle cx="744.9" cy="697.4" r="5" fill="#e3ad3e" opacity="0.14" filter="url(#blur1)"/><circle cx="745.9" cy="696.9" r="3.5" fill="#e3ad3e" opacity="0.14" filter="url(#blur1)"/><circle cx="858.8" cy="692.0" r="5" fill="#e3ad3e" opacity="0.14" filter="url(#blur1)"/><circle cx="859.8" cy="691.5" r="3.5" fill="#e3ad3e" opacity="0.14" filter="url(#blur1)"/><path d="M613.9 893.4 C768.4 893.4 802.8 882.0 957.3 882.0" fill="none" stroke="#e3ad3e" stroke-width="2.5" stroke-linecap="round"/><circle cx="624.1" cy="893.4" r="7" fill="#e3ad3e" opacity="0.22" filter="url(#blur1)"/><circle cx="625.1" cy="892.9" r="4.9" fill="#e3ad3e" opacity="0.22" filter="url(#blur1)"/><circle cx="624.1" cy="893.4" r="3.6" fill="#e3ad3e" opacity="0.95"/><circle cx="691.2" cy="892.3" r="7" fill="#e3ad3e" opacity="0.22" filter="url(#blur1)"/><circle cx="692.2" cy="891.8" r="4.9" fill="#e3ad3e" opacity="0.22" filter="url(#blur1)"/><circle cx="691.2" cy="892.3" r="3.6" fill="#e3ad3e" opacity="0.95"/><circle cx="760.1" cy="889.2" r="7" fill="#e3ad3e" opacity="0.22" filter="url(#blur1)"/><circle cx="761.1" cy="888.7" r="4.9" fill="#e3ad3e" opacity="0.22" filter="url(#blur1)"/><circle cx="760.1" cy="889.2" r="3.6" fill="#e3ad3e" opacity="0.95"/><circle cx="828.9" cy="885.2" r="7" fill="#e3ad3e" opacity="0.22" filter="url(#blur1)"/><circle cx="829.9" cy="884.7" r="4.9" fill="#e3ad3e" opacity="0.22" filter="url(#blur1)"/><circle cx="828.9" cy="885.2" r="3.6" fill="#e3ad3e" opacity="0.95"/><circle cx="897.8" cy="882.6" r="7" fill="#e3ad3e" opacity="0.22" filter="url(#blur1)"/><circle cx="898.8" cy="882.1" r="4.9" fill="#e3ad3e" opacity="0.22" filter="url(#blur1)"/><circle cx="897.8" cy="882.6" r="3.6" fill="#e3ad3e" opacity="0.95"/></svg>
<div style="position:absolute;left:392.6px;top:260.3px;width:193.0px;height:132.4px;box-sizing:border-box;border-radius:9px;background:#306d80;"></div>
<div style="position:absolute;left:394.1px;top:261.8px;width:190.0px;height:129.4px;border-radius:8px;background:#6890d6;overflow:hidden;"><div style="position:absolute;left:1px;top:1px;right:1px;height:33.0px;border-radius:7px;background:#5578b3;"></div></div>
<div style="position:absolute;left:404.1px;top:271.5px;font-size:11.5px;line-height:1;color:#eef0f4;font-weight:normal;white-space:nowrap;">Pattern 1</div>
<div style="position:absolute;left:420.4px;top:292.0px;width:15.8px;height:4.2px;background:rgba(70,168,200,0.85);border-radius:1px;"></div>
<div style="position:absolute;left:462.9px;top:292.0px;width:15.5px;height:4.2px;background:rgba(70,168,200,0.85);border-radius:1px;"></div>
<div style="position:absolute;left:505.2px;top:292.0px;width:15.8px;height:4.2px;background:rgba(70,168,200,0.85);border-radius:1px;"></div>
<div style="position:absolute;left:526.5px;top:292.0px;width:5.2px;height:4.2px;background:rgba(70,168,200,0.85);border-radius:1px;"></div>
<div style="position:absolute;left:447.1px;top:296.7px;width:15.5px;height:3.6px;background:rgba(70,168,200,0.85);border-radius:1px;"></div>
<div style="position:absolute;left:532.0px;top:296.7px;width:15.5px;height:3.6px;background:rgba(70,168,200,0.85);border-radius:1px;"></div>
<div style="position:absolute;left:404.5px;top:305.5px;width:15.5px;height:3.9px;background:rgba(70,168,200,0.85);border-radius:1px;"></div>
<div style="position:absolute;left:489.5px;top:305.5px;width:15.5px;height:3.9px;background:rgba(70,168,200,0.85);border-radius:1px;"></div>
<div style="position:absolute;left:547.8px;top:314.5px;width:15.5px;height:3.9px;background:rgba(70,168,200,0.85);border-radius:1px;"></div>
<div style="position:absolute;left:420.4px;top:359.0px;width:15.8px;height:4.3px;background:rgba(70,168,200,0.85);border-radius:1px;"></div>
<div style="position:absolute;left:462.9px;top:359.0px;width:15.5px;height:4.3px;background:rgba(70,168,200,0.85);border-radius:1px;"></div>
<div style="position:absolute;left:505.2px;top:359.0px;width:15.8px;height:4.3px;background:rgba(70,168,200,0.85);border-radius:1px;"></div>
<div style="position:absolute;left:526.5px;top:359.0px;width:5.2px;height:4.3px;background:rgba(70,168,200,0.85);border-radius:1px;"></div>
<div style="position:absolute;left:447.1px;top:368.5px;width:15.5px;height:3.5px;background:rgba(70,168,200,0.85);border-radius:1px;"></div>
<div style="position:absolute;left:532.0px;top:368.5px;width:15.5px;height:3.5px;background:rgba(70,168,200,0.85);border-radius:1px;"></div>
<div style="position:absolute;left:404.5px;top:377.4px;width:15.5px;height:3.6px;background:rgba(70,168,200,0.85);border-radius:1px;"></div>
<div style="position:absolute;left:489.5px;top:377.4px;width:15.5px;height:3.6px;background:rgba(70,168,200,0.85);border-radius:1px;"></div>
<div style="position:absolute;left:547.8px;top:381.7px;width:15.5px;height:3.8px;background:rgba(70,168,200,0.85);border-radius:1px;"></div>
<div style="position:absolute;left:511.8px;top:296px;width:2.8px;height:89.5px;background:rgba(236,242,252,0.9);"></div>
<div style="position:absolute;left:391.9px;top:318.7px;width:15.4px;height:15.4px;box-sizing:border-box;border-radius:50%;background:#6a6a6a;border:2.7px solid #c47ad8;"></div>
<div style="position:absolute;left:570.8px;top:318.7px;width:15.4px;height:15.4px;box-sizing:border-box;border-radius:50%;background:#6a6a6a;border:2.7px solid #e3ad3e;"></div>
<div style="position:absolute;left:654.2px;top:260.6px;width:167.2px;height:106.8px;box-sizing:border-box;border-radius:9px;background:#306d80;"></div>
<div style="position:absolute;left:655.7px;top:262.1px;width:164.2px;height:103.8px;border-radius:8px;background:#c99456;overflow:hidden;"><div style="position:absolute;left:1px;top:1px;right:1px;height:32.7px;border-radius:7px;background:#a87c48;"></div></div>
<div style="position:absolute;left:665.7px;top:271.5px;font-size:11.5px;line-height:1;color:#eef0f4;font-weight:normal;white-space:nowrap;">Scale Quantizer 1</div>
<div style="position:absolute;left:667.8px;top:296.2px;width:48px;height:16.4px;border-radius:3px;background:#9a9978;"></div>
<div style="position:absolute;left:393.9px;width:600px;text-align:center;top:301.6px;font-size:8.0px;line-height:1;color:#eeeeee;font-weight:normal;white-space:nowrap;">SCALE</div>
<div style="position:absolute;left:660px;top:312.7px;width:155px;height:3.5px;background:#7f9e86;"></div>
<div style="position:absolute;left:652.3px;top:306.7px;width:15.4px;height:15.4px;box-sizing:border-box;border-radius:50%;background:#6a6a6a;border:2.7px solid #e3ad3e;"></div>
<div style="position:absolute;left:807.5px;top:306.7px;width:15.4px;height:15.4px;box-sizing:border-box;border-radius:50%;background:#6a6a6a;border:2.7px solid #e3ad3e;"></div>
<div style="position:absolute;left:917.8px;top:263.6px;width:190.4px;height:105.6px;border-radius:8px;background:rgba(0,0,0,0.35);filter:blur(2px);"></div>
<div style="position:absolute;left:916.8px;top:261.6px;width:190.4px;height:105.6px;border-radius:8px;background:#9060b0;overflow:hidden;"><div style="position:absolute;left:1px;top:1px;right:1px;height:33.2px;border-radius:7px;background:#7a5096;"></div></div>
<div style="position:absolute;left:926.8px;top:271.5px;font-size:11.5px;line-height:1;color:#eef0f4;font-weight:normal;white-space:nowrap;">SimSim 1</div>
<svg style="position:absolute;left:999.3px;top:301.0px" width="24.7" height="24.6"><rect x="3" y="3" width="18.7" height="18.6" rx="3" fill="none" stroke="rgba(255,255,255,0.62)" stroke-width="1.8"/><path d="M7.8 7.8 L15.0 12.3 L7.8 17.2 Z" fill="rgba(255,255,255,0.7)"/></svg>
<div style="position:absolute;left:914.5px;top:306.6px;width:15.4px;height:15.4px;box-sizing:border-box;border-radius:50%;background:#6a6a6a;border:2.7px solid #e3ad3e;"></div>
<div style="position:absolute;left:1093.7px;top:306.6px;width:15.4px;height:15.4px;box-sizing:border-box;border-radius:50%;background:#6a6a6a;border:2.7px solid #5aaee6;"></div>
<div style="position:absolute;left:1149.3px;top:263.9px;width:190.2px;height:104.9px;border-radius:8px;background:rgba(0,0,0,0.35);filter:blur(2px);"></div>
<div style="position:absolute;left:1148.3px;top:261.9px;width:190.2px;height:104.9px;border-radius:8px;background:#576e8d;overflow:hidden;"><div style="position:absolute;left:1px;top:1px;right:1px;height:33.1px;border-radius:7px;background:#465b75;"></div></div>
<div style="position:absolute;left:1158.3px;top:271.7px;font-size:11.5px;line-height:1;color:#eef0f4;font-weight:normal;white-space:nowrap;">Chorus 1</div>
<div style="position:absolute;left:1231.0px;top:303.4px;width:24.4px;height:19.4px;border-radius:3px;background:#7a8ba6;"></div>
<div style="position:absolute;left:943.2px;width:600px;text-align:center;top:307.9px;font-size:11.3px;line-height:1;color:#ffffff;font-weight:bold;white-space:nowrap;">FX</div>
<div style="position:absolute;left:1145.8px;top:306.6px;width:15.4px;height:15.4px;box-sizing:border-box;border-radius:50%;background:#6a6a6a;border:2.7px solid #5aaee6;"></div>
<div style="position:absolute;left:1324.7px;top:306.6px;width:15.4px;height:15.4px;box-sizing:border-box;border-radius:50%;background:#6a6a6a;border:2.7px solid #5aaee6;"></div>
<div style="position:absolute;left:1380.9px;top:263.9px;width:190.0px;height:104.9px;border-radius:8px;background:rgba(0,0,0,0.35);filter:blur(2px);"></div>
<div style="position:absolute;left:1379.9px;top:261.9px;width:190.0px;height:104.9px;border-radius:8px;background:#576e8d;overflow:hidden;"><div style="position:absolute;left:1px;top:1px;right:1px;height:33.1px;border-radius:7px;background:#465b75;"></div></div>
<div style="position:absolute;left:1389.9px;top:271.7px;font-size:11.5px;line-height:1;color:#eef0f4;font-weight:normal;white-space:nowrap;">Reverb 1</div>
<div style="position:absolute;left:1462.4px;top:303.4px;width:24.4px;height:19.4px;border-radius:3px;background:#7a8ba6;"></div>
<div style="position:absolute;left:1174.6px;width:600px;text-align:center;top:307.9px;font-size:11.3px;line-height:1;color:#ffffff;font-weight:bold;white-space:nowrap;">FX</div>
<div style="position:absolute;left:1377.3px;top:306.6px;width:15.4px;height:15.4px;box-sizing:border-box;border-radius:50%;background:#6a6a6a;border:2.7px solid #5aaee6;"></div>
<div style="position:absolute;left:1556.5px;top:306.6px;width:15.4px;height:15.4px;box-sizing:border-box;border-radius:50%;background:#6a6a6a;border:2.7px solid #5aaee6;"></div>
<div style="position:absolute;left:1746.3px;top:369.1px;width:143.0px;height:200.9px;box-sizing:border-box;border-radius:8px;background:#f4f4f4;"></div>
<div style="position:absolute;left:1748.3px;top:371.1px;width:139.0px;height:196.9px;border-radius:7px;background:#78b1a0;overflow:hidden;"><div style="position:absolute;left:1px;top:1px;right:1px;height:31.4px;border-radius:6px;background:#65917f;"></div></div>
<div style="position:absolute;left:1757.0px;top:380.5px;font-size:11.5px;line-height:1;color:#eef0f4;font-weight:normal;white-space:nowrap;">Mixer</div>
<div style="position:absolute;left:1797.9px;top:449px;width:7.2px;height:72.6px;border-radius:1.5px;background:#1e1e1e;"></div>
<div style="position:absolute;left:1808.9px;top:449px;width:7.2px;height:72.6px;border-radius:1.5px;background:#1e1e1e;"></div>
<div style="position:absolute;left:1820.0px;top:449px;width:7.2px;height:72.6px;border-radius:1.5px;background:#1e1e1e;"></div>
<div style="position:absolute;left:1831.0px;top:449px;width:7.2px;height:72.6px;border-radius:1.5px;background:#1e1e1e;"></div>
<div style="position:absolute;left:1808.9px;top:495.2px;width:7.2px;height:26.4px;border-radius:1.5px;background:#6aa85c;"></div>
<div style="position:absolute;left:1808.9px;top:490.3px;width:7.2px;height:2px;background:#f0f0f0;"></div>
<div style="position:absolute;left:1831.0px;top:514.6px;width:7.2px;height:2px;background:#f0f0f0;"></div>
<div style="position:absolute;left:1744.8px;top:412.6px;width:15.4px;height:15.4px;box-sizing:border-box;border-radius:50%;background:#6a6a6a;border:2.7px solid #5aaee6;"></div>
<div style="position:absolute;left:1744.8px;top:431.4px;width:15.4px;height:15.4px;box-sizing:border-box;border-radius:50%;background:#6a6a6a;border:2.7px solid #5aaee6;"></div>
<div style="position:absolute;left:1744.8px;top:450.3px;width:15.4px;height:15.4px;box-sizing:border-box;border-radius:50%;background:#6a6a6a;border:2.7px solid #5aaee6;"></div>
<div style="position:absolute;left:1744.8px;top:469.1px;width:15.4px;height:15.4px;box-sizing:border-box;border-radius:50%;background:#6a6a6a;border:2.7px solid #5aaee6;"></div>
<div style="position:absolute;left:1744.8px;top:487.9px;width:15.4px;height:15.4px;box-sizing:border-box;border-radius:50%;background:#6a6a6a;border:2.7px solid #5aaee6;"></div>
<div style="position:absolute;left:1744.8px;top:506.9px;width:15.4px;height:15.4px;box-sizing:border-box;border-radius:50%;background:#6a6a6a;border:2.7px solid #5aaee6;"></div>
<div style="position:absolute;left:1744.8px;top:525.6px;width:15.4px;height:15.4px;box-sizing:border-box;border-radius:50%;background:#6a6a6a;border:2.7px solid #5aaee6;"></div>
<div style="position:absolute;left:1744.8px;top:544.7px;width:15.4px;height:15.4px;box-sizing:border-box;border-radius:50%;background:#6a6a6a;border:2.7px solid #5aaee6;"></div>
<div style="position:absolute;left:593.0px;top:433.7px;width:192.5px;height:180.5px;box-sizing:border-box;border-radius:9px;background:#306d80;"></div>
<div style="position:absolute;left:594.5px;top:435.2px;width:189.5px;height:177.5px;border-radius:8px;background:#b5473a;overflow:hidden;"><div style="position:absolute;left:1px;top:1px;right:1px;height:32.6px;border-radius:7px;background:#993a30;"></div></div>
<div style="position:absolute;left:604.5px;top:444.5px;font-size:11.5px;line-height:1;color:#eef0f4;font-weight:normal;white-space:nowrap;">Rhythm 1</div>
<div style="position:absolute;left:630.8px;top:493.5px;width:4px;height:4px;background:#f4ecea;"></div>
<div style="position:absolute;left:715.7px;top:493.5px;width:4px;height:4px;background:#f4ecea;"></div>
<div style="position:absolute;left:622.8px;top:510.6px;width:4px;height:4px;background:#f4ecea;"></div>
<div style="position:absolute;left:670.6px;top:510.6px;width:4px;height:4px;background:#f4ecea;"></div>
<div style="position:absolute;left:707.6px;top:510.6px;width:4px;height:4px;background:#f4ecea;"></div>
<div style="position:absolute;left:755.4px;top:510.6px;width:4px;height:4px;background:#f4ecea;"></div>
<div style="position:absolute;left:604.3px;top:527.9px;width:4px;height:4px;background:#f4ecea;"></div>
<div style="position:absolute;left:612.2px;top:527.9px;width:4px;height:4px;background:#f4ecea;"></div>
<div style="position:absolute;left:646.6px;top:527.9px;width:4px;height:4px;background:#f4ecea;"></div>
<div style="position:absolute;left:654.6px;top:527.9px;width:4px;height:4px;background:#f4ecea;"></div>
<div style="position:absolute;left:688.9px;top:527.9px;width:4px;height:4px;background:#f4ecea;"></div>
<div style="position:absolute;left:697.0px;top:527.9px;width:4px;height:4px;background:#f4ecea;"></div>
<div style="position:absolute;left:731.4px;top:527.9px;width:4px;height:4px;background:#f4ecea;"></div>
<div style="position:absolute;left:739.5px;top:527.9px;width:4px;height:4px;background:#f4ecea;"></div>
<div style="position:absolute;left:750.0px;top:527.9px;width:4px;height:4px;background:#f4ecea;"></div>
<div style="position:absolute;left:758.0px;top:527.9px;width:4px;height:4px;background:#f4ecea;"></div>
<div style="position:absolute;left:765.8px;top:527.9px;width:4px;height:4px;background:#f4ecea;"></div>
<div style="position:absolute;left:609.4px;top:545.2px;width:4px;height:4px;background:#f4ecea;"></div>
<div style="position:absolute;left:620.1px;top:545.2px;width:4px;height:4px;background:#f4ecea;"></div>
<div style="position:absolute;left:630.8px;top:545.2px;width:4px;height:4px;background:#f4ecea;"></div>
<div style="position:absolute;left:641.5px;top:545.2px;width:4px;height:4px;background:#f4ecea;"></div>
<div style="position:absolute;left:651.9px;top:545.2px;width:4px;height:4px;background:#f4ecea;"></div>
<div style="position:absolute;left:662.6px;top:545.2px;width:4px;height:4px;background:#f4ecea;"></div>
<div style="position:absolute;left:673.3px;top:545.2px;width:4px;height:4px;background:#f4ecea;"></div>
<div style="position:absolute;left:683.9px;top:545.2px;width:4px;height:4px;background:#f4ecea;"></div>
<div style="position:absolute;left:694.5px;top:545.2px;width:4px;height:4px;background:#f4ecea;"></div>
<div style="position:absolute;left:705.0px;top:545.2px;width:4px;height:4px;background:#f4ecea;"></div>
<div style="position:absolute;left:715.7px;top:545.2px;width:4px;height:4px;background:#f4ecea;"></div>
<div style="position:absolute;left:726.1px;top:545.2px;width:4px;height:4px;background:#f4ecea;"></div>
<div style="position:absolute;left:736.8px;top:545.2px;width:4px;height:4px;background:#f4ecea;"></div>
<div style="position:absolute;left:747.5px;top:545.2px;width:4px;height:4px;background:#f4ecea;"></div>
<div style="position:absolute;left:758.0px;top:545.2px;width:4px;height:4px;background:#f4ecea;"></div>
<div style="position:absolute;left:768.7px;top:545.2px;width:4px;height:4px;background:#f4ecea;"></div>
<div style="position:absolute;left:604.3px;top:562.3px;width:4px;height:4px;background:#f4ecea;"></div>
<div style="position:absolute;left:612.2px;top:562.3px;width:7.0px;height:4px;background:#f4ecea;"></div>
<div style="position:absolute;left:625.6px;top:562.3px;width:19.7px;height:4px;background:#f4ecea;"></div>
<div style="position:absolute;left:654.6px;top:562.3px;width:4px;height:4px;background:#f4ecea;"></div>
<div style="position:absolute;left:665.1px;top:562.3px;width:4px;height:4px;background:#f4ecea;"></div>
<div style="position:absolute;left:673.2px;top:562.3px;width:4px;height:4px;background:#f4ecea;"></div>
<div style="position:absolute;left:681.3px;top:562.3px;width:9.0px;height:4px;background:#f4ecea;"></div>
<div style="position:absolute;left:697.1px;top:562.3px;width:6.3px;height:4px;background:#f4ecea;"></div>
<div style="position:absolute;left:710.5px;top:562.3px;width:19.7px;height:4px;background:#f4ecea;"></div>
<div style="position:absolute;left:736.5px;top:562.3px;width:9.7px;height:4px;background:#f4ecea;"></div>
<div style="position:absolute;left:747.6px;top:562.3px;width:9.3px;height:4px;background:#f4ecea;"></div>
<div style="position:absolute;left:757.9px;top:562.3px;width:9.7px;height:4px;background:#f4ecea;"></div>
<div style="position:absolute;left:768.6px;top:562.3px;width:6.7px;height:4px;background:#f4ecea;"></div>
<div style="position:absolute;left:614.8px;top:579.7px;width:4px;height:4px;background:#f4ecea;"></div>
<div style="position:absolute;left:635.9px;top:579.7px;width:4px;height:4px;background:#f4ecea;"></div>
<div style="position:absolute;left:657.3px;top:579.7px;width:4px;height:4px;background:#f4ecea;"></div>
<div style="position:absolute;left:673.2px;top:579.7px;width:4px;height:4px;background:#f4ecea;"></div>
<div style="position:absolute;left:683.9px;top:579.7px;width:4px;height:4px;background:#f4ecea;"></div>
<div style="position:absolute;left:699.6px;top:579.7px;width:4px;height:4px;background:#f4ecea;"></div>
<div style="position:absolute;left:721.0px;top:579.7px;width:4px;height:4px;background:#f4ecea;"></div>
<div style="position:absolute;left:742.1px;top:579.7px;width:4px;height:4px;background:#f4ecea;"></div>
<div style="position:absolute;left:752.6px;top:579.7px;width:7.0px;height:4px;background:#f4ecea;"></div>
<div style="position:absolute;left:763.4px;top:579.7px;width:4px;height:4px;background:#f4ecea;"></div>
<div style="position:absolute;left:604.1px;top:596.8px;width:4px;height:4px;background:#f4ecea;"></div>
<div style="position:absolute;left:614.8px;top:596.8px;width:4px;height:4px;background:#f4ecea;"></div>
<div style="position:absolute;left:625.4px;top:596.8px;width:4px;height:4px;background:#f4ecea;"></div>
<div style="position:absolute;left:636.1px;top:596.8px;width:4px;height:4px;background:#f4ecea;"></div>
<div style="position:absolute;left:646.6px;top:596.8px;width:4px;height:4px;background:#f4ecea;"></div>
<div style="position:absolute;left:657.3px;top:596.8px;width:4px;height:4px;background:#f4ecea;"></div>
<div style="position:absolute;left:667.9px;top:596.8px;width:4px;height:4px;background:#f4ecea;"></div>
<div style="position:absolute;left:678.5px;top:596.8px;width:4px;height:4px;background:#f4ecea;"></div>
<div style="position:absolute;left:688.9px;top:596.8px;width:4px;height:4px;background:#f4ecea;"></div>
<div style="position:absolute;left:699.6px;top:596.8px;width:4px;height:4px;background:#f4ecea;"></div>
<div style="position:absolute;left:710.3px;top:596.8px;width:4px;height:4px;background:#f4ecea;"></div>
<div style="position:absolute;left:721.0px;top:596.8px;width:4px;height:4px;background:#f4ecea;"></div>
<div style="position:absolute;left:731.4px;top:596.8px;width:4px;height:4px;background:#f4ecea;"></div>
<div style="position:absolute;left:742.1px;top:596.8px;width:4px;height:4px;background:#f4ecea;"></div>
<div style="position:absolute;left:752.8px;top:596.8px;width:4px;height:4px;background:#f4ecea;"></div>
<div style="position:absolute;left:763.4px;top:596.8px;width:4px;height:4px;background:#f4ecea;"></div>
<div style="position:absolute;left:711.6px;top:469.7px;width:2.8px;height:138px;background:#f0e0dc;"></div>
<div style="position:absolute;left:591.9px;top:515.9px;width:15.4px;height:15.4px;box-sizing:border-box;border-radius:50%;background:#6a6a6a;border:2.7px solid #c47ad8;"></div>
<div style="position:absolute;left:771.2px;top:516.3px;width:15.4px;height:15.4px;box-sizing:border-box;border-radius:50%;background:#6a6a6a;border:2.7px solid #e3ad3e;"></div>
<div style="position:absolute;left:1118.0px;top:437.0px;width:189.9px;height:104.8px;border-radius:8px;background:rgba(0,0,0,0.35);filter:blur(2px);"></div>
<div style="position:absolute;left:1117.0px;top:435.0px;width:189.9px;height:104.8px;border-radius:8px;background:#9060b0;overflow:hidden;"><div style="position:absolute;left:1px;top:1px;right:1px;height:33.4px;border-radius:7px;background:#7a5096;"></div></div>
<div style="position:absolute;left:1127.0px;top:445.1px;font-size:11.5px;line-height:1;color:#eef0f4;font-weight:normal;white-space:nowrap;">Ostion 1</div>
<svg style="position:absolute;left:1199.3px;top:474.6px" width="25.0" height="24.5"><rect x="3" y="3" width="19.0" height="18.5" rx="3" fill="none" stroke="rgba(255,255,255,0.62)" stroke-width="1.8"/><path d="M7.9 7.7 L15.2 12.2 L7.9 17.2 Z" fill="rgba(255,255,255,0.7)"/></svg>
<div style="position:absolute;left:1114.6px;top:480.3px;width:15.4px;height:15.4px;box-sizing:border-box;border-radius:50%;background:#6a6a6a;border:2.7px solid #e3ad3e;"></div>
<div style="position:absolute;left:1293.6px;top:480.3px;width:15.4px;height:15.4px;box-sizing:border-box;border-radius:50%;background:#6a6a6a;border:2.7px solid #5aaee6;"></div>
<div style="position:absolute;left:388.7px;top:637.2px;width:193.0px;height:132.7px;box-sizing:border-box;border-radius:9px;background:#306d80;"></div>
<div style="position:absolute;left:390.2px;top:638.7px;width:190.0px;height:129.7px;border-radius:8px;background:#6890d6;overflow:hidden;"><div style="position:absolute;left:1px;top:1px;right:1px;height:33.3px;border-radius:7px;background:#5578b3;"></div></div>
<div style="position:absolute;left:400.2px;top:648.7px;font-size:11.5px;line-height:1;color:#eef0f4;font-weight:normal;white-space:nowrap;">Bass Pattern 1</div>
<div style="position:absolute;left:422.0px;top:643.4px;width:5.0px;height:29.6px;background:rgba(70,168,200,0.85);border-radius:1px;"></div>
<div style="position:absolute;left:507.0px;top:643.4px;width:5.0px;height:29.6px;background:rgba(70,168,200,0.85);border-radius:1px;"></div>
<div style="position:absolute;left:464.5px;top:733.2px;width:5.0px;height:29.6px;background:rgba(70,168,200,0.85);border-radius:1px;"></div>
<div style="position:absolute;left:549.5px;top:733.2px;width:5.1px;height:29.6px;background:rgba(70,168,200,0.85);border-radius:1px;"></div>
<div style="position:absolute;left:508.2px;top:673px;width:2.8px;height:89.8px;background:rgba(236,242,252,0.9);"></div>
<div style="position:absolute;left:388.3px;top:695.7px;width:15.4px;height:15.4px;box-sizing:border-box;border-radius:50%;background:#6a6a6a;border:2.7px solid #c47ad8;"></div>
<div style="position:absolute;left:567.3px;top:695.6px;width:15.4px;height:15.4px;box-sizing:border-box;border-radius:50%;background:#6a6a6a;border:2.7px solid #e3ad3e;"></div>
<div style="position:absolute;left:913.8px;top:640.6px;width:190.4px;height:105.0px;border-radius:8px;background:rgba(0,0,0,0.35);filter:blur(2px);"></div>
<div style="position:absolute;left:912.8px;top:638.6px;width:190.4px;height:105.0px;border-radius:8px;background:#9060b0;overflow:hidden;"><div style="position:absolute;left:1px;top:1px;right:1px;height:33.4px;border-radius:7px;background:#7a5096;"></div></div>
<div style="position:absolute;left:922.8px;top:648.7px;font-size:11.5px;line-height:1;color:#eef0f4;font-weight:normal;white-space:nowrap;">4OSC 1</div>
<svg style="position:absolute;left:995.7px;top:678.5px" width="24.7" height="24.6"><rect x="3" y="3" width="18.7" height="18.6" rx="3" fill="none" stroke="rgba(255,255,255,0.62)" stroke-width="1.8"/><path d="M7.8 7.8 L15.0 12.3 L7.8 17.2 Z" fill="rgba(255,255,255,0.7)"/></svg>
<div style="position:absolute;left:910.3px;top:683.6px;width:15.4px;height:15.4px;box-sizing:border-box;border-radius:50%;background:#6a6a6a;border:2.7px solid #e3ad3e;"></div>
<div style="position:absolute;left:1090.0px;top:683.6px;width:15.4px;height:15.4px;box-sizing:border-box;border-radius:50%;background:#6a6a6a;border:2.7px solid #5aaee6;"></div>
<div style="position:absolute;left:1145.5px;top:640.6px;width:190.0px;height:105.0px;border-radius:8px;background:rgba(0,0,0,0.35);filter:blur(2px);"></div>
<div style="position:absolute;left:1144.5px;top:638.6px;width:190.0px;height:105.0px;border-radius:8px;background:#576e8d;overflow:hidden;"><div style="position:absolute;left:1px;top:1px;right:1px;height:33.4px;border-radius:7px;background:#465b75;"></div></div>
<div style="position:absolute;left:1154.5px;top:648.7px;font-size:11.5px;line-height:1;color:#eef0f4;font-weight:normal;white-space:nowrap;">Compressor 2</div>
<div style="position:absolute;left:1227.3px;top:680.6px;width:24.4px;height:19.4px;border-radius:3px;background:#7a8ba6;"></div>
<div style="position:absolute;left:939.5px;width:600px;text-align:center;top:685.1px;font-size:11.3px;line-height:1;color:#ffffff;font-weight:bold;white-space:nowrap;">FX</div>
<div style="position:absolute;left:1142.0px;top:683.6px;width:15.4px;height:15.4px;box-sizing:border-box;border-radius:50%;background:#6a6a6a;border:2.7px solid #5aaee6;"></div>
<div style="position:absolute;left:1321.7px;top:683.6px;width:15.4px;height:15.4px;box-sizing:border-box;border-radius:50%;background:#6a6a6a;border:2.7px solid #5aaee6;"></div>
<div style="position:absolute;left:428.1px;top:827.7px;width:193.1px;height:132.4px;box-sizing:border-box;border-radius:9px;background:#306d80;"></div>
<div style="position:absolute;left:429.6px;top:829.2px;width:190.1px;height:129.4px;border-radius:8px;background:#6890d6;overflow:hidden;"><div style="position:absolute;left:1px;top:1px;right:1px;height:33.3px;border-radius:7px;background:#5578b3;"></div></div>
<div style="position:absolute;left:439.6px;top:839.2px;font-size:11.5px;line-height:1;color:#eef0f4;font-weight:normal;white-space:nowrap;">Pad Pattern 1</div>
<div style="position:absolute;left:439.6px;top:860.1px;width:42.3px;height:3.4px;background:rgba(70,168,200,0.85);border-radius:1px;"></div>
<div style="position:absolute;left:439.6px;top:871.1px;width:42.3px;height:3.1px;background:rgba(70,168,200,0.85);border-radius:1px;"></div>
<div style="position:absolute;left:439.6px;top:881.6px;width:42.3px;height:3.4px;background:rgba(70,168,200,0.85);border-radius:1px;"></div>
<div style="position:absolute;left:482.0px;top:949.9px;width:127.6px;height:3.3px;background:rgba(70,168,200,0.85);border-radius:1px;"></div>
<div style="position:absolute;left:547.1px;top:863.5px;width:2.8px;height:89.3px;background:rgba(236,242,252,0.9);"></div>
<div style="position:absolute;left:427.1px;top:885.8px;width:15.4px;height:15.4px;box-sizing:border-box;border-radius:50%;background:#6a6a6a;border:2.7px solid #c47ad8;"></div>
<div style="position:absolute;left:606.2px;top:885.7px;width:15.4px;height:15.4px;box-sizing:border-box;border-radius:50%;background:#6a6a6a;border:2.7px solid #e3ad3e;"></div>
<div style="position:absolute;left:952.8px;top:831.3px;width:190.4px;height:104.3px;border-radius:8px;background:rgba(0,0,0,0.35);filter:blur(2px);"></div>
<div style="position:absolute;left:951.8px;top:829.3px;width:190.4px;height:104.3px;border-radius:8px;background:#9060b0;overflow:hidden;"><div style="position:absolute;left:1px;top:1px;right:1px;height:33.4px;border-radius:7px;background:#7a5096;"></div></div>
<div style="position:absolute;left:961.8px;top:839.4px;font-size:11.5px;line-height:1;color:#eef0f4;font-weight:normal;white-space:nowrap;">SimSim 3</div>
<svg style="position:absolute;left:1034.8px;top:868.8px" width="24.7" height="24.6"><rect x="3" y="3" width="18.7" height="18.6" rx="3" fill="none" stroke="rgba(255,255,255,0.62)" stroke-width="1.8"/><path d="M7.8 7.8 L15.0 12.3 L7.8 17.2 Z" fill="rgba(255,255,255,0.7)"/></svg>
<div style="position:absolute;left:949.6px;top:874.3px;width:15.4px;height:15.4px;box-sizing:border-box;border-radius:50%;background:#6a6a6a;border:2.7px solid #e3ad3e;"></div>
<div style="position:absolute;left:1128.6px;top:874.3px;width:15.4px;height:15.4px;box-sizing:border-box;border-radius:50%;background:#6a6a6a;border:2.7px solid #5aaee6;"></div>
<div style="position:absolute;left:1184.5px;top:831.3px;width:190.3px;height:104.3px;border-radius:8px;background:rgba(0,0,0,0.35);filter:blur(2px);"></div>
<div style="position:absolute;left:1183.5px;top:829.3px;width:190.3px;height:104.3px;border-radius:8px;background:#576e8d;overflow:hidden;"><div style="position:absolute;left:1px;top:1px;right:1px;height:33.4px;border-radius:7px;background:#465b75;"></div></div>
<div style="position:absolute;left:1193.5px;top:839.4px;font-size:11.5px;line-height:1;color:#eef0f4;font-weight:normal;white-space:nowrap;">Reverb 3</div>
<div style="position:absolute;left:1266.4px;top:871.1px;width:24.4px;height:19.4px;border-radius:3px;background:#7a8ba6;"></div>
<div style="position:absolute;left:978.6px;width:600px;text-align:center;top:875.6px;font-size:11.3px;line-height:1;color:#ffffff;font-weight:bold;white-space:nowrap;">FX</div>
<div style="position:absolute;left:1180.9px;top:874.3px;width:15.4px;height:15.4px;box-sizing:border-box;border-radius:50%;background:#6a6a6a;border:2.7px solid #5aaee6;"></div>
<div style="position:absolute;left:1359.9px;top:874.3px;width:15.4px;height:15.4px;box-sizing:border-box;border-radius:50%;background:#6a6a6a;border:2.7px solid #5aaee6;"></div>
<div style="position:absolute;left:71.0px;top:1104.6px;width:2418.0px;height:35.7px;background:#2c2c2c;"></div>
<div style="position:absolute;left:86.3px;top:1115.8px;font-size:15.2px;line-height:1;color:#f0f0f0;font-weight:bold;white-space:nowrap;">Mixer</div>
<div style="position:absolute;left:2339.4px;top:1108.9px;width:81.3px;height:27.7px;box-sizing:border-box;background:#5aa8d4;border:1.8px solid #5aa8d4;border-radius:6px;"></div>
<div style="position:absolute;left:2080.0px;width:600px;text-align:center;top:1117.6px;font-size:12.0px;line-height:1;color:#eef6fb;font-weight:normal;white-space:nowrap;">Spectrum</div>
<div style="position:absolute;left:2431.0px;top:1108.9px;width:52.7px;height:27.7px;box-sizing:border-box;background:#3a3a3a;border:1.8px solid #4c4c4c;border-radius:6px;"></div>
<div style="position:absolute;left:2157.3px;width:600px;text-align:center;top:1117.5px;font-size:12.6px;line-height:1;color:#e8e8e8;font-weight:normal;white-space:nowrap;">8ch</div>
<div style="position:absolute;left:71.0px;top:1140.3px;width:2418.0px;height:420.7px;background:#1c1c1c;"></div>
<div style="position:absolute;left:78.9px;top:1148.2px;width:86px;height:405.4px;border-radius:7px;background:#2c2c2c;"></div>
<div style="position:absolute;left:81.0px;top:1178.6px;width:25.4px;height:314.1px;background:#000;"></div>
<div style="position:absolute;left:-163.6px;width:600px;text-align:center;top:1156.3px;font-size:16.2px;line-height:1;color:#e4e4e4;font-weight:normal;white-space:nowrap;transform:scaleX(0.71);letter-spacing:-0.2px;">SimSi...</div>
<div style="position:absolute;left:135.3px;top:1187.5px;width:2.9px;height:15.2px;background:#ececec;"></div>
<div style="position:absolute;left:111.4px;top:1254.3px;width:50.6px;height:259.2px;box-sizing:border-box;border-radius:6px;background:#2e2e2e;border:1.5px solid #3c3c3c;"></div>
<div style="position:absolute;left:-163.6px;width:600px;text-align:center;top:1533.4px;font-size:15.2px;line-height:1;color:#e4e4e4;font-weight:normal;white-space:nowrap;transform:scaleX(0.78);letter-spacing:-0.2px;">-60.0...</div>
<div style="position:absolute;left:180.0px;top:1148.2px;width:86px;height:405.4px;border-radius:7px;background:#2c2c2c;"></div>
<div style="position:absolute;left:182.1px;top:1178.6px;width:25.4px;height:314.1px;background:#000;"></div>
<div style="position:absolute;left:-62.5px;width:600px;text-align:center;top:1156.3px;font-size:16.2px;line-height:1;color:#e4e4e4;font-weight:normal;white-space:nowrap;transform:scaleX(0.71);letter-spacing:-0.2px;">Ostio...</div>
<div style="position:absolute;left:236.4px;top:1187.5px;width:2.9px;height:15.2px;background:#ececec;"></div>
<div style="position:absolute;left:212.5px;top:1254.3px;width:50.6px;height:259.2px;box-sizing:border-box;border-radius:6px;background:#2e2e2e;border:1.5px solid #3c3c3c;"></div>
<div style="position:absolute;left:213.6px;top:1359.3px;width:50px;height:154.2px;border-radius:6px;background:#3e7390;"></div>
<div style="position:absolute;left:-62.5px;width:600px;text-align:center;top:1533.4px;font-size:15.2px;line-height:1;color:#e4e4e4;font-weight:normal;white-space:nowrap;transform:scaleX(0.78);letter-spacing:-0.2px;">-8.0 dB</div>
<div style="position:absolute;left:281.3px;top:1148.2px;width:86px;height:405.4px;border-radius:7px;background:#2c2c2c;"></div>
<div style="position:absolute;left:283.4px;top:1178.6px;width:25.4px;height:314.1px;background:#000;"></div>
<div style="position:absolute;left:38.8px;width:600px;text-align:center;top:1156.3px;font-size:16.2px;line-height:1;color:#e4e4e4;font-weight:normal;white-space:nowrap;transform:scaleX(0.71);letter-spacing:-0.2px;">4OSC 1</div>
<div style="position:absolute;left:337.7px;top:1187.5px;width:2.9px;height:15.2px;background:#ececec;"></div>
<div style="position:absolute;left:313.8px;top:1254.3px;width:50.6px;height:259.2px;box-sizing:border-box;border-radius:6px;background:#2e2e2e;border:1.5px solid #3c3c3c;"></div>
<div style="position:absolute;left:38.8px;width:600px;text-align:center;top:1533.4px;font-size:15.2px;line-height:1;color:#e4e4e4;font-weight:normal;white-space:nowrap;transform:scaleX(0.78);letter-spacing:-0.2px;">-60.0...</div>
<div style="position:absolute;left:382.7px;top:1148.2px;width:86px;height:405.4px;border-radius:7px;background:#2c2c2c;"></div>
<div style="position:absolute;left:384.8px;top:1178.6px;width:25.4px;height:314.1px;background:#000;"></div>
<div style="position:absolute;left:140.2px;width:600px;text-align:center;top:1156.3px;font-size:16.2px;line-height:1;color:#e4e4e4;font-weight:normal;white-space:nowrap;transform:scaleX(0.71);letter-spacing:-0.2px;">SimSi...</div>
<div style="position:absolute;left:439.1px;top:1187.5px;width:2.9px;height:15.2px;background:#ececec;"></div>
<div style="position:absolute;left:415.2px;top:1254.3px;width:50.6px;height:259.2px;box-sizing:border-box;border-radius:6px;background:#2e2e2e;border:1.5px solid #3c3c3c;"></div>
<div style="position:absolute;left:416.3px;top:1374.9px;width:50px;height:138.6px;border-radius:6px;background:#3e7390;"></div>
<div style="position:absolute;left:140.2px;width:600px;text-align:center;top:1533.4px;font-size:15.2px;line-height:1;color:#e4e4e4;font-weight:normal;white-space:nowrap;transform:scaleX(0.78);letter-spacing:-0.2px;">-10.5 ...</div>
<div style="position:absolute;left:182.6px;top:1376.3px;width:25px;height:116px;background:#111;"></div>
<div style="position:absolute;left:183.4px;top:1377px;width:10.6px;height:114.5px;background:#6eaa5e;"></div>
<div style="position:absolute;left:196.5px;top:1377px;width:10.5px;height:114.5px;background:#6eaa5e;"></div>
<div style="position:absolute;left:183.4px;top:1356.2px;width:10.6px;height:2.2px;background:#fff;"></div>
<div style="position:absolute;left:196.5px;top:1356.2px;width:10.5px;height:2.2px;background:#fff;"></div>
<div style="position:absolute;left:386.2px;top:1444.9px;width:10.5px;height:2.2px;background:#fff;"></div>
<div style="position:absolute;left:399.2px;top:1448.5px;width:10.1px;height:2.2px;background:#fff;"></div>
<div style="position:absolute;left:483.8px;top:1147.4px;width:87px;height:405.6px;box-sizing:border-box;border-radius:7px;background:#202020;border:1.5px solid #363636;"></div>
<div style="position:absolute;left:585.1px;top:1147.4px;width:87px;height:405.6px;box-sizing:border-box;border-radius:7px;background:#202020;border:1.5px solid #363636;"></div>
<div style="position:absolute;left:686.2px;top:1147.4px;width:87px;height:405.6px;box-sizing:border-box;border-radius:7px;background:#202020;border:1.5px solid #363636;"></div>
<div style="position:absolute;left:788.0px;top:1147.4px;width:87px;height:405.6px;box-sizing:border-box;border-radius:7px;background:#202020;border:1.5px solid #363636;"></div>
<div style="position:absolute;left:900.4px;top:1148px;width:1580.4px;height:405px;border-radius:6px;background:#232323;"></div>
<div style="position:absolute;left:904.9px;top:1152.8px;width:1571.3px;height:395.8px;background:#000;"></div>
<svg style="position:absolute;left:0;top:0" width="2560" height="1731"><rect x="905.45" y="1208.2" width="15.27" height="340.4" fill="#db5840"/><rect x="921.82" y="1208.2" width="15.27" height="340.4" fill="#db5840"/><rect x="938.19" y="1172.1" width="15.27" height="376.5" fill="#db5840"/><rect x="954.55" y="1172.1" width="15.27" height="376.5" fill="#db5840"/><rect x="970.92" y="1172.1" width="15.27" height="376.5" fill="#db5840"/><rect x="987.29" y="1172.1" width="15.27" height="376.5" fill="#db5840"/><rect x="1003.66" y="1172.1" width="15.27" height="376.5" fill="#db5840"/><rect x="1020.02" y="1172.1" width="15.27" height="376.5" fill="#db5840"/><rect x="1036.39" y="1172.1" width="15.27" height="376.5" fill="#db5840"/><rect x="1052.76" y="1172.1" width="15.27" height="376.5" fill="#db5840"/><rect x="1069.13" y="1172.1" width="15.27" height="376.5" fill="#db5840"/><rect x="1085.49" y="1172.1" width="15.27" height="376.5" fill="#db5840"/><rect x="1101.86" y="1172.1" width="15.27" height="376.5" fill="#db5840"/><rect x="1118.23" y="1185.5" width="15.27" height="363.1" fill="#db5840"/><rect x="1134.60" y="1185.5" width="15.27" height="363.1" fill="#db5840"/><rect x="1150.97" y="1185.5" width="15.27" height="363.1" fill="#db5840"/><rect x="1167.33" y="1185.5" width="15.27" height="363.1" fill="#db5840"/><rect x="1183.70" y="1185.5" width="15.27" height="363.1" fill="#db5840"/><rect x="1200.07" y="1185.5" width="15.27" height="363.1" fill="#db5840"/><rect x="1216.44" y="1267.0" width="15.27" height="281.6" fill="#f8e75c"/><rect x="1232.80" y="1267.0" width="15.27" height="281.6" fill="#f8e75c"/><rect x="1249.17" y="1267.0" width="15.27" height="281.6" fill="#f8e75c"/><rect x="1265.54" y="1267.0" width="15.27" height="281.6" fill="#f8e75c"/><rect x="1281.91" y="1333.9" width="15.27" height="214.7" fill="#f8e75c"/><rect x="1298.27" y="1333.9" width="15.27" height="214.7" fill="#f8e75c"/><rect x="1314.64" y="1333.9" width="15.27" height="214.7" fill="#f8e75c"/><rect x="1331.01" y="1333.9" width="15.27" height="214.7" fill="#f8e75c"/><rect x="1347.38" y="1364.1" width="15.27" height="184.5" fill="#6eab5c"/><rect x="1363.75" y="1364.1" width="15.27" height="184.5" fill="#6eab5c"/><rect x="1380.11" y="1364.1" width="15.27" height="184.5" fill="#6eab5c"/><rect x="1396.48" y="1367.3" width="15.27" height="181.3" fill="#6eab5c"/><rect x="1412.85" y="1367.3" width="15.27" height="181.3" fill="#6eab5c"/><rect x="1429.22" y="1388.7" width="15.27" height="159.9" fill="#6eab5c"/><rect x="1445.58" y="1388.7" width="15.27" height="159.9" fill="#6eab5c"/><rect x="1461.95" y="1407.9" width="15.27" height="140.7" fill="#6eab5c"/><rect x="1478.32" y="1407.9" width="15.27" height="140.7" fill="#6eab5c"/><rect x="1494.69" y="1410.1" width="15.27" height="138.5" fill="#6eab5c"/><rect x="1511.06" y="1410.1" width="15.27" height="138.5" fill="#6eab5c"/><rect x="1527.42" y="1438.1" width="15.27" height="110.5" fill="#6eab5c"/><rect x="1543.79" y="1419.4" width="15.27" height="129.2" fill="#6eab5c"/><rect x="1560.16" y="1419.4" width="15.27" height="129.2" fill="#6eab5c"/><rect x="1576.53" y="1428.0" width="15.27" height="120.6" fill="#6eab5c"/><rect x="1592.89" y="1449.6" width="15.27" height="99.0" fill="#6eab5c"/><rect x="1609.26" y="1427.4" width="15.27" height="121.2" fill="#6eab5c"/><rect x="1625.63" y="1422.1" width="15.27" height="126.5" fill="#6eab5c"/><rect x="1642.00" y="1450.7" width="15.27" height="97.9" fill="#6eab5c"/><rect x="1658.36" y="1476.1" width="15.27" height="72.5" fill="#6eab5c"/><rect x="1674.73" y="1428.0" width="15.27" height="120.6" fill="#6eab5c"/><rect x="1691.10" y="1453.4" width="15.27" height="95.2" fill="#6eab5c"/><rect x="1707.47" y="1479.6" width="15.27" height="69.0" fill="#6eab5c"/><rect x="1723.84" y="1471.6" width="15.27" height="77.0" fill="#6eab5c"/><rect x="1740.20" y="1466.7" width="15.27" height="81.9" fill="#6eab5c"/><rect x="1756.57" y="1497.0" width="15.27" height="51.6" fill="#6eab5c"/><rect x="1772.94" y="1473.7" width="15.27" height="74.9" fill="#6eab5c"/><rect x="1789.31" y="1490.3" width="15.27" height="58.3" fill="#6eab5c"/><rect x="1805.67" y="1486.3" width="15.27" height="62.3" fill="#6eab5c"/><rect x="1822.04" y="1453.6" width="15.27" height="95.0" fill="#6eab5c"/><rect x="1838.41" y="1487.1" width="15.27" height="61.5" fill="#6eab5c"/><rect x="1854.78" y="1466.2" width="15.27" height="82.4" fill="#6eab5c"/><rect x="1871.14" y="1476.1" width="15.27" height="72.5" fill="#6eab5c"/><rect x="1887.51" y="1476.9" width="15.27" height="71.7" fill="#6eab5c"/><rect x="1903.88" y="1450.7" width="15.27" height="97.9" fill="#6eab5c"/><rect x="1920.25" y="1475.0" width="15.27" height="73.6" fill="#6eab5c"/><rect x="1936.62" y="1455.0" width="15.27" height="93.6" fill="#6eab5c"/><rect x="1952.98" y="1456.8" width="15.27" height="91.8" fill="#6eab5c"/><rect x="1969.35" y="1410.1" width="15.27" height="138.5" fill="#6eab5c"/><rect x="1985.72" y="1436.3" width="15.27" height="112.3" fill="#6eab5c"/><rect x="2002.09" y="1457.6" width="15.27" height="91.0" fill="#6eab5c"/><rect x="2018.45" y="1438.9" width="15.27" height="109.7" fill="#6eab5c"/><rect x="2034.82" y="1412.7" width="15.27" height="135.9" fill="#6eab5c"/><rect x="2051.19" y="1430.9" width="15.27" height="117.7" fill="#6eab5c"/><rect x="2067.56" y="1411.4" width="15.27" height="137.2" fill="#6eab5c"/><rect x="2083.92" y="1391.9" width="15.27" height="156.7" fill="#6eab5c"/><rect x="2100.29" y="1357.4" width="15.27" height="191.2" fill="#6eab5c"/><rect x="2116.66" y="1394.8" width="15.27" height="153.8" fill="#6eab5c"/><rect x="2133.03" y="1366.7" width="15.27" height="181.9" fill="#6eab5c"/><rect x="2149.40" y="1364.6" width="15.27" height="184.0" fill="#6eab5c"/><rect x="2165.76" y="1332.5" width="15.27" height="216.1" fill="#f8e75c"/><rect x="2182.13" y="1296.4" width="15.27" height="252.2" fill="#f8e75c"/><rect x="2198.50" y="1324.5" width="15.27" height="224.1" fill="#f8e75c"/><rect x="2214.87" y="1277.7" width="15.27" height="270.9" fill="#f8e75c"/><rect x="2231.23" y="1290.3" width="15.27" height="258.3" fill="#f8e75c"/><rect x="2247.60" y="1272.9" width="15.27" height="275.7" fill="#f8e75c"/><rect x="2263.97" y="1289.7" width="15.27" height="258.9" fill="#f8e75c"/><rect x="2280.34" y="1305.0" width="15.27" height="243.6" fill="#f8e75c"/><rect x="2296.71" y="1307.1" width="15.27" height="241.5" fill="#f8e75c"/><rect x="2313.07" y="1308.4" width="15.27" height="240.2" fill="#f8e75c"/><rect x="2329.44" y="1309.3" width="15.27" height="239.3" fill="#f8e75c"/><rect x="2345.81" y="1295.9" width="15.27" height="252.7" fill="#f8e75c"/><rect x="2362.18" y="1303.6" width="15.27" height="245.0" fill="#f8e75c"/><rect x="2378.54" y="1295.1" width="15.27" height="253.5" fill="#f8e75c"/><rect x="2394.91" y="1292.4" width="15.27" height="256.2" fill="#f8e75c"/><rect x="2411.28" y="1291.3" width="15.27" height="257.3" fill="#f8e75c"/><rect x="2427.65" y="1303.1" width="15.27" height="245.5" fill="#f8e75c"/><rect x="2444.01" y="1309.0" width="15.27" height="239.6" fill="#f8e75c"/><rect x="2460.38" y="1317.0" width="15.27" height="231.6" fill="#f8e75c"/></svg>
<div style="position:absolute;left:905.2px;top:1536.2px;font-size:10.8px;line-height:1;color:rgba(150,150,150,0.85);font-weight:normal;white-space:nowrap;">40</div>
<div style="position:absolute;left:1875.5px;width:600px;text-align:right;top:1536.2px;font-size:10.8px;line-height:1;color:rgba(150,150,150,0.85);font-weight:normal;white-space:nowrap;">18k</div>
<div style="position:absolute;left:71.0px;top:1561.0px;width:2418.0px;height:1.2px;background:#2a2a2a;"></div>
<div style="position:absolute;left:71.0px;top:1562.2px;width:2418.0px;height:74.8px;background:#1b1b1b;"></div>
<div style="position:absolute;left:81.2px;top:1571.5px;width:62.8px;height:55.1px;box-sizing:border-box;background:#2c2c2c;border:1.8px solid #474747;border-radius:6px;"></div>
<div style="position:absolute;left:150.0px;top:1571.5px;width:62.0px;height:55.1px;box-sizing:border-box;background:#2c2c2c;border:1.8px solid #474747;border-radius:6px;"></div>
<div style="position:absolute;left:218.4px;top:1571.5px;width:62.6px;height:55.1px;box-sizing:border-box;background:#2c2c2c;border:1.8px solid #474747;border-radius:6px;"></div>
<div style="position:absolute;left:292.0px;top:1571.5px;width:62.8px;height:55.1px;box-sizing:border-box;background:#2c2c2c;border:1.8px solid #474747;border-radius:6px;"></div>
<svg style="position:absolute;left:0;top:1500px" width="700" height="140"><path d="M107.5 90.5 L122.0 99.0 L107.5 107.5 Z" fill="#eaeaea"/><rect x="174.0" y="91.8" width="14.5" height="14.5" fill="#eaeaea"/><rect x="242.0" y="91.5" width="2.8" height="15" fill="#eaeaea"/><path d="M258.0 91.5 L246.0 99.0 L258.0 106.5 Z" fill="#eaeaea"/><circle cx="323.2" cy="99.0" r="9.6" fill="#eaeaea"/></svg>
<div style="position:absolute;left:399.0px;top:1593.3px;font-size:15.0px;line-height:1;color:#dcdcdc;font-weight:normal;white-space:nowrap;">BPM</div>
<div style="position:absolute;left:437.4px;top:1571.5px;width:69.6px;height:55.1px;background:#2a2a2a;"></div>
<div style="position:absolute;left:172.2px;width:600px;text-align:center;top:1592.3px;font-size:16.8px;line-height:1;color:#f0f0f0;font-weight:bold;white-space:nowrap;">120</div>
<div style="position:absolute;left:512.0px;top:1571.5px;width:69.5px;height:55.1px;box-sizing:border-box;background:#2c2c2c;border:1.8px solid #474747;border-radius:6px;"></div>
<div style="position:absolute;left:246.8px;width:600px;text-align:center;top:1593.1px;font-size:15.2px;line-height:1;color:#e4e4e4;font-weight:normal;white-space:nowrap;">Link</div>
<div style="position:absolute;left:587.5px;top:1571.5px;width:49.5px;height:55.1px;box-sizing:border-box;background:#2c2c2c;border:1.8px solid #474747;border-radius:6px;"></div>
<div style="position:absolute;left:312.3px;width:600px;text-align:center;top:1593.1px;font-size:15.2px;line-height:1;color:#e4e4e4;font-weight:normal;white-space:nowrap;">Tap</div>
<div style="position:absolute;left:452.6px;width:600px;text-align:center;top:1577.4px;font-size:17.1px;line-height:1;color:#f2f2f2;font-weight:bold;white-space:nowrap;">0:05.129</div>
<div style="position:absolute;left:452.5px;width:600px;text-align:center;top:1606.0px;font-size:16.0px;line-height:1;color:#e4e4e4;font-weight:normal;white-space:nowrap;">3|3|249</div>
<div style="position:absolute;left:860.8px;top:1573.8px;width:40.0px;height:50.4px;box-sizing:border-box;background:#2c2c2c;border:1.8px solid #474747;border-radius:6px;"></div>
<div style="position:absolute;left:580.8px;width:600px;text-align:center;top:1591.8px;font-size:15.6px;line-height:1;color:#e8e8e8;font-weight:normal;white-space:nowrap;">Arr</div>
<div style="position:absolute;left:902.9px;top:1573.3px;width:304.6px;height:51.9px;box-sizing:border-box;border-radius:5px;background:#3d5a70;border:1.6px solid #5b93c2;"></div>
<div style="position:absolute;left:907.2px;top:1594.5px;font-size:10.9px;line-height:1;color:#f0f0f0;font-weight:normal;white-space:nowrap;">Intro [65]</div>
<div style="position:absolute;left:1207.5px;top:1573.3px;width:608.1px;height:51.9px;box-sizing:border-box;border-radius:5px;background:#4a5e47;border:1.6px solid #6f9f6a;"></div>
<div style="position:absolute;left:1211.8px;top:1594.5px;font-size:10.9px;line-height:1;color:#f0f0f0;font-weight:normal;white-space:nowrap;">Verse [66]</div>
<div style="position:absolute;left:1815.6px;top:1573.3px;width:152.4px;height:51.9px;box-sizing:border-box;border-radius:5px;background:#6e5a35;border:1.6px solid #c9a04a;"></div>
<div style="position:absolute;left:1819.9px;top:1594.5px;font-size:10.9px;line-height:1;color:#f0f0f0;font-weight:normal;white-space:nowrap;">PreChorus [67]</div>
<div style="position:absolute;left:1968.0px;top:1573.3px;width:475.0px;height:51.9px;box-sizing:border-box;border-radius:5px;background:#633f3f;border:1.6px solid #c56f6f;"></div>
<div style="position:absolute;left:1972.3px;top:1594.5px;font-size:10.9px;line-height:1;color:#f0f0f0;font-weight:normal;white-space:nowrap;">Chorus [68]</div>
<div style="position:absolute;left:999.3px;top:1573.3px;width:2.8px;height:51.9px;background:#f4f4f4;"></div>
<div style="position:absolute;left:2446.0px;top:1574.2px;width:29.5px;height:49.6px;box-sizing:border-box;background:#2c2c2c;border:1.8px solid #474747;border-radius:6px;"></div>
<div style="position:absolute;left:2160.8px;width:600px;text-align:center;top:1592.2px;font-size:14.5px;line-height:1;color:#e8e8e8;font-weight:bold;white-space:nowrap;">+</div>
</div></div>
<div style="position:absolute;left:71px;top:48px;width:2418px;height:1589px;box-sizing:border-box;border-radius:20px;border:1.5px solid #474747;pointer-events:none;"></div>
</body></html>
